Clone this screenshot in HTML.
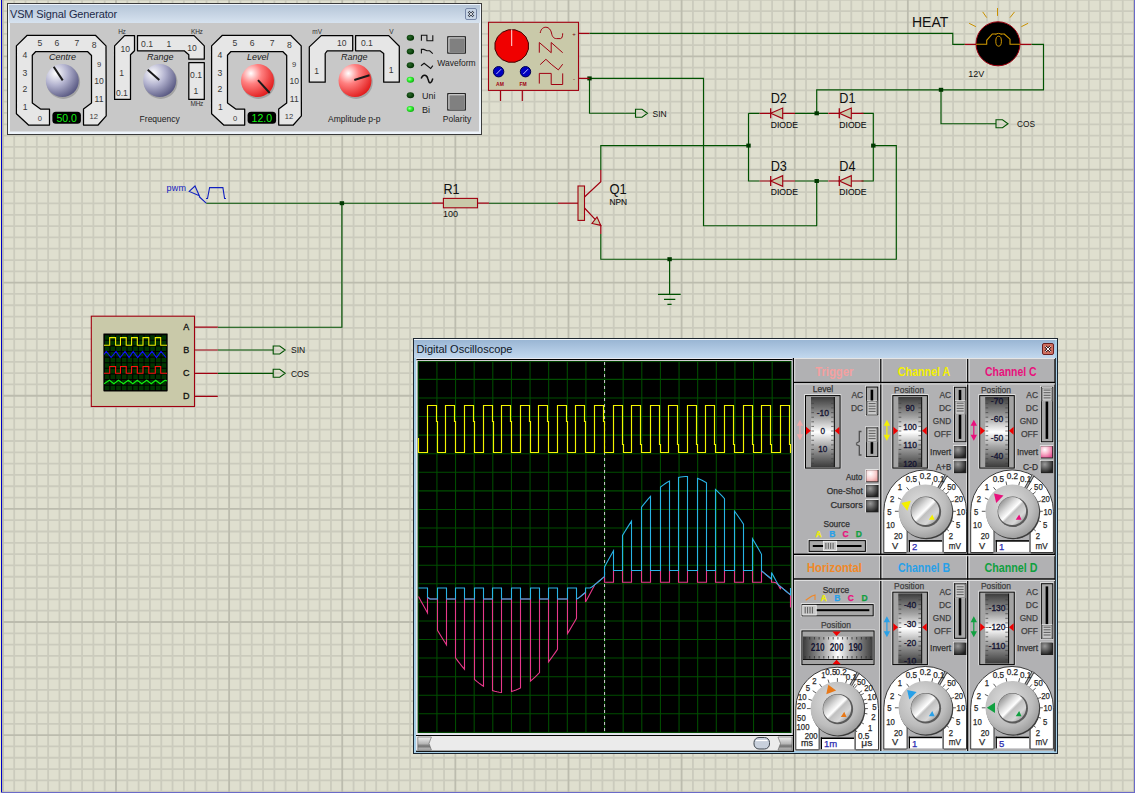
<!DOCTYPE html>
<html><head><meta charset="utf-8"><style>
html,body{margin:0;padding:0;width:1135px;height:793px;overflow:hidden;background:#dfdfcf;}
svg{display:block;font-family:"Liberation Sans",sans-serif;}
</style></head><body>
<svg width="1135" height="793" viewBox="0 0 1135 793">
<rect x="0" y="0" width="1135" height="793" fill="#dfdfcf"/>
<path d="M14.19 0V793M25.50 0V793M36.82 0V793M48.13 0V793M59.44 0V793M70.75 0V793M82.06 0V793M93.38 0V793M104.69 0V793M127.31 0V793M138.62 0V793M149.94 0V793M161.25 0V793M172.56 0V793M183.87 0V793M195.18 0V793M206.50 0V793M217.81 0V793M240.43 0V793M251.74 0V793M263.06 0V793M274.37 0V793M285.68 0V793M296.99 0V793M308.30 0V793M319.62 0V793M330.93 0V793M353.55 0V793M364.86 0V793M376.18 0V793M387.49 0V793M398.80 0V793M410.11 0V793M421.42 0V793M432.74 0V793M444.05 0V793M466.67 0V793M477.98 0V793M489.30 0V793M500.61 0V793M511.92 0V793M523.23 0V793M534.54 0V793M545.86 0V793M557.17 0V793M579.79 0V793M591.10 0V793M602.42 0V793M613.73 0V793M625.04 0V793M636.35 0V793M647.66 0V793M658.98 0V793M670.29 0V793M692.91 0V793M704.22 0V793M715.54 0V793M726.85 0V793M738.16 0V793M749.47 0V793M760.78 0V793M772.10 0V793M783.41 0V793M806.03 0V793M817.34 0V793M828.66 0V793M839.97 0V793M851.28 0V793M862.59 0V793M873.90 0V793M885.22 0V793M896.53 0V793M919.15 0V793M930.46 0V793M941.78 0V793M953.09 0V793M964.40 0V793M975.71 0V793M987.02 0V793M998.34 0V793M1009.65 0V793M1032.27 0V793M1043.58 0V793M1054.90 0V793M1066.21 0V793M1077.52 0V793M1088.83 0V793M1100.14 0V793M1111.46 0V793M1122.77 0V793M0 -0.15H1135M0 11.16H1135M0 22.47H1135M0 33.79H1135M0 45.10H1135M0 67.72H1135M0 79.03H1135M0 90.35H1135M0 101.66H1135M0 112.97H1135M0 124.28H1135M0 135.59H1135M0 146.91H1135M0 158.22H1135M0 180.84H1135M0 192.15H1135M0 203.47H1135M0 214.78H1135M0 226.09H1135M0 237.40H1135M0 248.71H1135M0 260.03H1135M0 271.34H1135M0 293.96H1135M0 305.27H1135M0 316.59H1135M0 327.90H1135M0 339.21H1135M0 350.52H1135M0 361.83H1135M0 373.15H1135M0 384.46H1135M0 407.08H1135M0 418.39H1135M0 429.71H1135M0 441.02H1135M0 452.33H1135M0 463.64H1135M0 474.95H1135M0 486.27H1135M0 497.58H1135M0 520.20H1135M0 531.51H1135M0 542.83H1135M0 554.14H1135M0 565.45H1135M0 576.76H1135M0 588.07H1135M0 599.39H1135M0 610.70H1135M0 633.32H1135M0 644.63H1135M0 655.95H1135M0 667.26H1135M0 678.57H1135M0 689.88H1135M0 701.19H1135M0 712.51H1135M0 723.82H1135M0 746.44H1135M0 757.75H1135M0 769.07H1135M0 780.38H1135M0 791.69H1135" stroke="#cbcbbd" stroke-width="1.8" fill="none"/>
<path d="M2.88 0V793M116.00 0V793M229.12 0V793M342.24 0V793M455.36 0V793M568.48 0V793M681.60 0V793M794.72 0V793M907.84 0V793M1020.96 0V793M1134.08 0V793M0 56.41H1135M0 169.53H1135M0 282.65H1135M0 395.77H1135M0 508.89H1135M0 622.01H1135M0 735.13H1135" stroke="#bcbcae" stroke-width="1.8" fill="none"/>
<rect x="0" y="0" width="1" height="793" fill="#eeeec8"/>
<rect x="1" y="0" width="1" height="792" fill="#0000c8"/>
<rect x="1" y="792" width="1134" height="1" fill="#6a6ac8"/>
<rect x="1134" y="0" width="1" height="793" fill="#6a6ac8"/>
<path d="M589.5 33.3H952.8V44.4H964.8M1031.4 44.4H1043.5V89.8H816.7V113.3M941 89.8V123.7H996M589.5 78.4H703.5V225.7H816.7V181M589.5 78.4V113.2H635.5M748.5 113.3H759.6M795 113.3H828M861.5 113.3H873.3V181H861.5M828 181H795M759.6 181H748.5V113.3M600.8 170V145.6H748.5M873.3 145.6H896.3V259.2H600.8V234M669.6 259.2V294.4M206.2 203.2H431.8M489 203.2H558M341.9 203.2V327.2H217.8M217.8 350H273.2M217.8 373.3H273.2" stroke="#005200" stroke-width="1.15" fill="none"/>
<path d="M658 294.4H680.7M664 299.4H675.3M667.4 304.4H671.6" stroke="#005200" stroke-width="1.3" fill="none"/>
<rect x="587.3" y="76.4" width="4.4" height="4" fill="#003800"/>
<rect x="814.5" y="111.3" width="4.4" height="4" fill="#003800"/>
<rect x="938.8" y="87.8" width="4.4" height="4" fill="#003800"/>
<rect x="746.3" y="143.6" width="4.4" height="4" fill="#003800"/>
<rect x="871.1" y="143.6" width="4.4" height="4" fill="#003800"/>
<rect x="814.5" y="179.0" width="4.4" height="4" fill="#003800"/>
<rect x="667.4" y="257.2" width="4.4" height="4" fill="#003800"/>
<rect x="339.7" y="201.2" width="4.4" height="4" fill="#003800"/>
<rect x="488.5" y="22.3" width="90" height="68.1" fill="#c9c9a9" stroke="#a00010" stroke-width="1.1"/>
<path d="M578.5 33.3H589.5M578.5 78.4H589.5M500.5 90.4V101M522.3 90.4V101" stroke="#a00010" stroke-width="1.2"/>
<text x="574" y="35.5" font-size="6" fill="#700010" text-anchor="middle">+</text>
<text x="574" y="80.5" font-size="6" fill="#700010" text-anchor="middle">-</text>
<polygon points="528.4,49.2 525.8,55.2 521.1,59.7 515.0,62.2 508.4,62.2 502.3,59.7 497.6,55.2 495.0,49.2 495.0,42.8 497.6,36.8 502.3,32.3 508.4,29.8 515.0,29.8 521.1,32.3 525.8,36.8 528.4,42.8" fill="#f00000" stroke="#400000" stroke-width="1"/>
<path d="M511.7 46V29.5" stroke="#ffe0e0" stroke-width="1"/>
<circle cx="498.6" cy="71.7" r="5.2" fill="#0000c0" stroke="#000050" stroke-width="1"/>
<path d="M496.40000000000003 74L501.1 69.2" stroke="#d0d0ff" stroke-width="0.9"/>
<circle cx="525.5" cy="71.7" r="5.2" fill="#0000c0" stroke="#000050" stroke-width="1"/>
<path d="M523.3 74L528.0 69.2" stroke="#d0d0ff" stroke-width="0.9"/>
<text x="500" y="86" font-size="5" fill="#a00010" text-anchor="middle" font-weight="bold">AM</text>
<text x="523" y="86" font-size="5" fill="#a00010" text-anchor="middle" font-weight="bold">FM</text>
<path d="M540.2 33C541 28.5 543.5 27.2 546 27.2C548.8 27.2 551 30 551.5 33C552.2 37 554 38.6 556.5 38.6H560.5C562 38.6 562.7 36 562.7 33.3M539.3 52.7V42.5L551.2 52.7V42.5L562.7 52.7M540.2 64.6L545.9 59.3L551.2 64.2L558.3 69.9L562.7 64.2M539.3 83.6V73.4H551.2V84.5H562.7V73.4" stroke="#a00010" stroke-width="1" fill="none"/>
<path d="M635.5 109.2H642.0L647.5 113.2L642.0 117.2H635.5Z" fill="none" stroke="#005200" stroke-width="1.1"/>
<text x="652.5" y="116.5" font-size="9" fill="#101010" textLength="14.2" lengthAdjust="spacingAndGlyphs">SIN</text>
<path d="M996 119.7H1002.5L1008 123.7L1002.5 127.7H996Z" fill="none" stroke="#005200" stroke-width="1.1"/>
<text x="1017" y="127.0" font-size="9" fill="#101010" textLength="18" lengthAdjust="spacingAndGlyphs">COS</text>
<path d="M273.2 346H279.7L285.2 350L279.7 354H273.2Z" fill="none" stroke="#005200" stroke-width="1.1"/>
<text x="291" y="353.3" font-size="9" fill="#101010" textLength="14.2" lengthAdjust="spacingAndGlyphs">SIN</text>
<path d="M273.2 369.3H279.7L285.2 373.3L279.7 377.3H273.2Z" fill="none" stroke="#005200" stroke-width="1.1"/>
<text x="291" y="376.6" font-size="9" fill="#101010" textLength="18" lengthAdjust="spacingAndGlyphs">COS</text>
<path d="M759.7 113.3H795.0" stroke="#a00010" stroke-width="1.2"/>
<path d="M770.7 108.3V118.3" stroke="#a00010" stroke-width="1.3"/>
<path d="M782.7 108.0V118.6L770.7 113.3Z" fill="#c9c9a9" stroke="#a00010" stroke-width="1.1"/>
<text x="770.7" y="102.9" font-size="15.5" fill="#101010" textLength="16.2" lengthAdjust="spacingAndGlyphs">D2</text>
<text x="770.7" y="127.5" font-size="9" fill="#101010" stroke="#101010" stroke-width="0.12" textLength="27.2" lengthAdjust="spacingAndGlyphs">DIODE</text>
<path d="M828.3 113.3H863.5999999999999" stroke="#a00010" stroke-width="1.2"/>
<path d="M839.3 108.3V118.3" stroke="#a00010" stroke-width="1.3"/>
<path d="M851.3 108.0V118.6L839.3 113.3Z" fill="#c9c9a9" stroke="#a00010" stroke-width="1.1"/>
<text x="839.3" y="102.9" font-size="15.5" fill="#101010" textLength="16.2" lengthAdjust="spacingAndGlyphs">D1</text>
<text x="839.3" y="127.5" font-size="9" fill="#101010" stroke="#101010" stroke-width="0.12" textLength="27.2" lengthAdjust="spacingAndGlyphs">DIODE</text>
<path d="M759.7 181H795.0" stroke="#a00010" stroke-width="1.2"/>
<path d="M770.7 176V186" stroke="#a00010" stroke-width="1.3"/>
<path d="M782.7 175.7V186.3L770.7 181Z" fill="#c9c9a9" stroke="#a00010" stroke-width="1.1"/>
<text x="770.7" y="170.6" font-size="15.5" fill="#101010" textLength="16.2" lengthAdjust="spacingAndGlyphs">D3</text>
<text x="770.7" y="195.2" font-size="9" fill="#101010" stroke="#101010" stroke-width="0.12" textLength="27.2" lengthAdjust="spacingAndGlyphs">DIODE</text>
<path d="M828.3 181H863.5999999999999" stroke="#a00010" stroke-width="1.2"/>
<path d="M839.3 176V186" stroke="#a00010" stroke-width="1.3"/>
<path d="M851.3 175.7V186.3L839.3 181Z" fill="#c9c9a9" stroke="#a00010" stroke-width="1.1"/>
<text x="839.3" y="170.6" font-size="15.5" fill="#101010" textLength="16.2" lengthAdjust="spacingAndGlyphs">D4</text>
<text x="839.3" y="195.2" font-size="9" fill="#101010" stroke="#101010" stroke-width="0.12" textLength="27.2" lengthAdjust="spacingAndGlyphs">DIODE</text>
<path d="M964.8 44.4H976M1020 44.4H1031.4" stroke="#a00010" stroke-width="1.2"/>
<circle cx="998" cy="43.8" r="22" fill="#000" stroke="#a00010" stroke-width="1"/>
<path d="M976 44.3H986.7V40.3L992.3 34H996.3M1000.8 34H1004.3L1010 39.2V44.3H1020.2" stroke="#d09800" stroke-width="1.1" fill="none"/>
<path d="M995.5 34.5C997.5 33 999.5 33 1001.5 34.5" stroke="#d09800" stroke-width="1" fill="none"/>
<ellipse cx="998.6" cy="41.2" rx="2.8" ry="5" stroke="#d09800" stroke-width="1" fill="none"/>
<path d="M997.5 8L997.5 15.9" stroke="#c89000" stroke-width="1"/>
<path d="M982.7 11.9L986.7 17.6" stroke="#c89000" stroke-width="1"/>
<path d="M1014.5 11.9L1010 17.6" stroke="#c89000" stroke-width="1"/>
<path d="M969.1 23.3L975.9 26.7" stroke="#c89000" stroke-width="1"/>
<path d="M1028.1 23.3L1021.3 26.7" stroke="#c89000" stroke-width="1"/>
<text x="912" y="27" font-size="14" fill="#101010">HEAT</text>
<text x="968.3" y="77" font-size="9" fill="#101010" textLength="16" lengthAdjust="spacingAndGlyphs">12V</text>
<path d="M431.8 203.2H443.4M477.5 203.2H489" stroke="#a00010" stroke-width="1.2"/>
<rect x="443.4" y="198.4" width="34.1" height="9.4" fill="#c9c9a9" stroke="#a00010" stroke-width="1.1"/>
<text x="443.4" y="194" font-size="15" fill="#101010" textLength="16.1" lengthAdjust="spacingAndGlyphs">R1</text>
<text x="443" y="217" font-size="9" fill="#101010">100</text>
<path d="M558 203.2H578" stroke="#a00010" stroke-width="1.2"/>
<rect x="578" y="186" width="6.5" height="34.4" fill="#c9c9a9" stroke="#a00010" stroke-width="1.1"/>
<path d="M584.5 197L600.8 181.7V170M584.5 208L600.8 225.4V234" stroke="#a00010" stroke-width="1.2" fill="none"/>
<path d="M600.8 225.4L592 223.5L597 217Z" fill="#c9c9a9" stroke="#a00010" stroke-width="1.1"/>
<text x="609.4" y="193.6" font-size="15" fill="#101010" textLength="17.3" lengthAdjust="spacingAndGlyphs">Q1</text>
<text x="609.5" y="205.3" font-size="9" fill="#101010" stroke="#101010" stroke-width="0.12" textLength="17.6" lengthAdjust="spacingAndGlyphs">NPN</text>
<text x="166.5" y="190.5" font-size="9" fill="#1020c0" letter-spacing="0.3">pwm</text>
<path d="M206.2 203.2L199 196.5M189.2 191.4L195 186L199.3 195.7Z" stroke="#1020c0" stroke-width="1.1" fill="none"/>
<path d="M206 198.5H207.5L209.6 187.6H222.9L224.6 198.5H226" stroke="#1020c0" stroke-width="1.1" fill="none"/>
<path d="M194.5 327.2H217.8M194.5 350H217.8M194.5 373.3H217.8M194.5 396.4H217.8" stroke="#a00010" stroke-width="1.2"/>
<rect x="91.3" y="316.2" width="103.2" height="90.3" fill="#c9c9a9" stroke="#a00010" stroke-width="1.1"/>
<rect x="104" y="334" width="63" height="56.8" fill="#003500"/>
<path d="M104.30 334V390.8M109.98 334V390.8M115.66 334V390.8M121.34 334V390.8M127.02 334V390.8M132.70 334V390.8M138.38 334V390.8M144.06 334V390.8M149.74 334V390.8M155.42 334V390.8M161.10 334V390.8M166.78 334V390.8M104 334.60H167M104 340.22H167M104 345.84H167M104 351.46H167M104 357.08H167M104 362.70H167M104 368.32H167M104 373.94H167M104 379.56H167M104 385.18H167M104 390.80H167" stroke="#000" stroke-width="1.1"/>
<rect x="104" y="334" width="63" height="56.8" fill="none" stroke="#000" stroke-width="1"/>
<path d="M104 345.2H109.7V337.6H115.6V345.2H120.5V337.6H126.2V345.2H131.6V337.6H137.3V345.2H143V337.6H148.8V345.2H155.3V337.6H160.7V345.2H167" stroke="#f0f000" stroke-width="1.1" fill="none"/>
<path d="M104 373.3H109.7V366.5H115.6V373.3H120.5V366.5H126.2V373.3H131.6V366.5H137.3V373.3H143V366.5H148.8V373.3H155.3V366.5H160.7V373.3H167" stroke="#ff1010" stroke-width="1.1" fill="none"/>
<path d="M104.0 354.5L106.2 351.5L111.1 357.5L116.0 351.5L120.1 357.5L125.0 351.5L129.1 357.5L133.2 351.5L137.7 357.5L142.6 351.5L147.1 357.5L152.0 351.5L156.5 357.5L161.0 351.5L166.0 357.5" stroke="#1010ff" stroke-width="1.1" fill="none"/>
<path d="M104.1 383.8L109.4 380.2L113.9 383.8L118.4 380.2L123.4 383.8L128.3 380.2L132.8 383.8L137.3 380.2L141.8 383.8L146.7 380.2L151.2 383.8L155.7 380.2L160.2 383.8L165.1 380.2L167.0 381.0" stroke="#10f010" stroke-width="1.1" fill="none"/>
<text x="186.3" y="330.0" font-size="9" fill="#101010" stroke="#101010" stroke-width="0.3" text-anchor="middle">A</text>
<text x="186.3" y="352.8" font-size="9" fill="#101010" stroke="#101010" stroke-width="0.3" text-anchor="middle">B</text>
<text x="186.3" y="376.1" font-size="9" fill="#101010" stroke="#101010" stroke-width="0.3" text-anchor="middle">C</text>
<text x="186.3" y="399.2" font-size="9" fill="#101010" stroke="#101010" stroke-width="0.3" text-anchor="middle">D</text>
<defs>
<linearGradient id="tbar" x1="0" y1="0" x2="0" y2="1"><stop offset="0" stop-color="#b6c6d8"/><stop offset="1" stop-color="#d6e2ef"/></linearGradient>
<radialGradient id="knobB" cx="0.3" cy="0.28" r="0.8"><stop offset="0" stop-color="#ffffff"/><stop offset="0.45" stop-color="#b4b4d0"/><stop offset="1" stop-color="#55557f"/></radialGradient>
<radialGradient id="knobR" cx="0.3" cy="0.28" r="0.8"><stop offset="0" stop-color="#ffffff"/><stop offset="0.4" stop-color="#ff8080"/><stop offset="1" stop-color="#e01818"/></radialGradient>
<radialGradient id="ledOff" cx="0.4" cy="0.4" r="0.6"><stop offset="0" stop-color="#2a6a2a"/><stop offset="1" stop-color="#003000"/></radialGradient>
<radialGradient id="ledOn" cx="0.4" cy="0.4" r="0.6"><stop offset="0" stop-color="#a0ffa0"/><stop offset="0.5" stop-color="#30f030"/><stop offset="1" stop-color="#10b010"/></radialGradient>
</defs>
<rect x="7" y="3" width="475" height="132" fill="#3c3c3c"/>
<rect x="8" y="4" width="473" height="130" fill="#eef4fb"/>
<rect x="9" y="5" width="471" height="18" fill="url(#tbar)"/>
<rect x="10" y="23" width="469" height="108.5" fill="#c8c8c8"/>
<text x="10" y="17.8" font-size="11" fill="#1e2a48" letter-spacing="-0.15">VSM Signal Generator</text>
<rect x="465.5" y="8.5" width="11" height="11" rx="1.5" fill="#c8d6e6" stroke="#7888a8" stroke-width="1"/>
<path d="M468.5 11.5L473.5 16.5M473.5 11.5L468.5 16.5" stroke="#303848" stroke-width="2.2"/>
<path d="M468.5 11.5L473.5 16.5M473.5 11.5L468.5 16.5" stroke="#ffffff" stroke-width="0.8"/>
<path d="M16.4 45.9L27.2 35.3L95.4 35.3L106.0 45.9L106.2 115.8L98.1 125.0L83.5 125.0L83.5 109.1L91.5 103.1L91.5 55.5L87.5 51.5L35.8 51.5L32.3 55.2L32.3 103.1L40.5 109.1L49.5 109.1L49.5 125.0L28.5 125.0L16.4 113.7Z" fill="#e6e6e6" stroke="#000" stroke-width="1.25" stroke-linejoin="round"/>
<text x="39.8" y="121.0" font-size="7.6" fill="#383838" text-anchor="middle">0</text>
<text x="25.2" y="110.0" font-size="8.6" fill="#383838" text-anchor="middle">1</text>
<text x="24.8" y="91.5" font-size="8.6" fill="#383838" text-anchor="middle">2</text>
<text x="24.8" y="75.6" font-size="8.6" fill="#383838" text-anchor="middle">3</text>
<text x="24.8" y="58.2" font-size="8.6" fill="#383838" text-anchor="middle">4</text>
<text x="39.8" y="45.8" font-size="8.6" fill="#383838" text-anchor="middle">5</text>
<text x="57.0" y="45.8" font-size="8.6" fill="#383838" text-anchor="middle">6</text>
<text x="76.9" y="45.8" font-size="8.6" fill="#383838" text-anchor="middle">7</text>
<text x="94.1" y="48.4" font-size="8.6" fill="#383838" text-anchor="middle">8</text>
<text x="99.0" y="67.0" font-size="7.6" fill="#383838" text-anchor="middle">9</text>
<text x="99.0" y="84.3" font-size="8.6" fill="#383838" text-anchor="middle">10</text>
<text x="99.0" y="102.2" font-size="8.6" fill="#383838" text-anchor="middle">11</text>
<text x="93.7" y="118.6" font-size="7.6" fill="#383838" text-anchor="middle">12</text>
<text x="62.5" y="59.5" font-size="9" font-style="italic" fill="#202020" text-anchor="middle">Centre</text>
<circle cx="63.3" cy="82.1" r="16.8" fill="#8a8a8a" opacity="0.6"/>
<circle cx="62.3" cy="80.6" r="16.5" fill="url(#knobB)"/>
<path d="M53.7 66.7L62.7 80.4" stroke="#1a1a1a" stroke-width="2"/>
<rect x="52.4" y="111.8" width="28.5" height="12" rx="3.5" fill="#000"/>
<text x="66.6" y="122" font-size="10.5" fill="#10f010" text-anchor="middle">50.0</text>
<path d="M211.6 45.9L222.4 35.3L290.6 35.3L301.2 45.9L301.4 115.8L293.3 125.0L278.7 125.0L278.7 109.1L286.7 103.1L286.7 55.5L282.7 51.5L231.0 51.5L227.5 55.2L227.5 103.1L235.7 109.1L244.7 109.1L244.7 125.0L223.7 125.0L211.6 113.7Z" fill="#e6e6e6" stroke="#000" stroke-width="1.25" stroke-linejoin="round"/>
<text x="235.0" y="121.0" font-size="7.6" fill="#383838" text-anchor="middle">0</text>
<text x="220.4" y="110.0" font-size="8.6" fill="#383838" text-anchor="middle">1</text>
<text x="220.0" y="91.5" font-size="8.6" fill="#383838" text-anchor="middle">2</text>
<text x="220.0" y="75.6" font-size="8.6" fill="#383838" text-anchor="middle">3</text>
<text x="220.0" y="58.2" font-size="8.6" fill="#383838" text-anchor="middle">4</text>
<text x="235.0" y="45.8" font-size="8.6" fill="#383838" text-anchor="middle">5</text>
<text x="252.2" y="45.8" font-size="8.6" fill="#383838" text-anchor="middle">6</text>
<text x="272.1" y="45.8" font-size="8.6" fill="#383838" text-anchor="middle">7</text>
<text x="289.3" y="48.4" font-size="8.6" fill="#383838" text-anchor="middle">8</text>
<text x="294.2" y="67.0" font-size="7.6" fill="#383838" text-anchor="middle">9</text>
<text x="294.2" y="84.3" font-size="8.6" fill="#383838" text-anchor="middle">10</text>
<text x="294.2" y="102.2" font-size="8.6" fill="#383838" text-anchor="middle">11</text>
<text x="288.9" y="118.6" font-size="7.6" fill="#383838" text-anchor="middle">12</text>
<text x="257.7" y="59.5" font-size="9" font-style="italic" fill="#202020" text-anchor="middle">Level</text>
<circle cx="258.5" cy="82.1" r="16.8" fill="#8a8a8a" opacity="0.6"/>
<circle cx="257.5" cy="80.6" r="16.5" fill="url(#knobR)"/>
<path d="M258.0 80.2L269.7 93.0" stroke="#1a1a1a" stroke-width="2"/>
<rect x="247.6" y="111.8" width="28.5" height="12" rx="3.5" fill="#000"/>
<text x="261.8" y="122" font-size="10.5" fill="#10f010" text-anchor="middle">12.0</text>
<path d="M114.6 45.9L124.6 35.6L134.5 35.6L134.5 50.8L130.5 54.8L130.5 99.4L114.6 99.4Z" fill="#e6e6e6" stroke="#000" stroke-width="1.25" stroke-linejoin="round"/>
<path d="M137.5 35.6L194.1 35.6L204.3 45.9L204.3 59.2L188.8 59.2L188.8 54.8L184.2 50.8L137.5 50.8Z" fill="#e6e6e6" stroke="#000" stroke-width="1.25" stroke-linejoin="round"/>
<path d="M188.8 62.7L204.3 62.7L204.3 99.4L188.8 99.4Z" fill="#e6e6e6" stroke="#000" stroke-width="1.25" stroke-linejoin="round"/>
<text x="125.2" y="51.8" font-size="8.6" fill="#383838" text-anchor="middle">10</text>
<text x="121.7" y="75.7" font-size="8.6" fill="#383838" text-anchor="middle">1</text>
<text x="121.9" y="96.2" font-size="8.6" fill="#383838" text-anchor="middle">0.1</text>
<text x="147.1" y="46.5" font-size="8.6" fill="#383838" text-anchor="middle">0.1</text>
<text x="168.9" y="46.5" font-size="8.6" fill="#383838" text-anchor="middle">1</text>
<text x="192.1" y="51.2" font-size="8.6" fill="#383838" text-anchor="middle">10</text>
<text x="196.1" y="77.7" font-size="8.6" fill="#383838" text-anchor="middle">0.1</text>
<text x="195.8" y="94.2" font-size="8.6" fill="#383838" text-anchor="middle">1</text>
<text x="121.9" y="34" font-size="6.5" fill="#303030" text-anchor="middle" letter-spacing="-0.3">Hz</text>
<text x="196.8" y="34" font-size="6.5" fill="#303030" text-anchor="middle" letter-spacing="-0.3">KHz</text>
<text x="196.8" y="105.5" font-size="6.5" fill="#303030" text-anchor="middle" letter-spacing="-0.3">MHz</text>
<text x="160.3" y="59.5" font-size="9" font-style="italic" fill="#202020" text-anchor="middle">Range</text>
<circle cx="160.7" cy="82.1" r="16.8" fill="#8a8a8a" opacity="0.6"/>
<circle cx="159.7" cy="80.6" r="16.5" fill="url(#knobB)"/>
<path d="M147.7 69.8L159.3 80" stroke="#1a1a1a" stroke-width="2"/>
<text x="159.7" y="121.5" font-size="8.5" fill="#202020" text-anchor="middle">Frequency</text>
<path d="M309.3 46.9L321.2 35.6L352.7 35.6L352.7 50.8L327.2 50.8L325.2 53.5L325.2 82.2L309.3 82.2Z" fill="#e6e6e6" stroke="#000" stroke-width="1.25" stroke-linejoin="round"/>
<path d="M355.6 35.6L388.7 35.6L399.3 46.2L399.3 82.2L383.7 82.2L383.7 53.5L380.1 50.8L355.6 50.8Z" fill="#e6e6e6" stroke="#000" stroke-width="1.25" stroke-linejoin="round"/>
<text x="341.7" y="45.9" font-size="8.6" fill="#383838" text-anchor="middle">10</text>
<text x="316.6" y="73.7" font-size="8.6" fill="#383838" text-anchor="middle">1</text>
<text x="366.9" y="45.9" font-size="8.6" fill="#383838" text-anchor="middle">0.1</text>
<text x="391.1" y="73" font-size="8.6" fill="#383838" text-anchor="middle">1</text>
<text x="317.2" y="34" font-size="6.5" fill="#303030" text-anchor="middle">mV</text>
<text x="391.4" y="34" font-size="6.5" fill="#303030" text-anchor="middle">V</text>
<text x="354.3" y="59.5" font-size="9" font-style="italic" fill="#202020" text-anchor="middle">Range</text>
<circle cx="356" cy="82.1" r="16.8" fill="#8a8a8a" opacity="0.6"/>
<circle cx="355" cy="80.6" r="16.5" fill="url(#knobR)"/>
<path d="M354.3 80L369.5 75.3" stroke="#1a1a1a" stroke-width="2"/>
<text x="354.3" y="121.5" font-size="8.5" fill="#202020" text-anchor="middle">Amplitude p-p</text>
<ellipse cx="410.4" cy="37.8" rx="3.7" ry="3.0" fill="url(#ledOff)"/>
<ellipse cx="410.4" cy="51.6" rx="3.7" ry="3.0" fill="url(#ledOff)"/>
<ellipse cx="410.4" cy="65.3" rx="3.7" ry="3.0" fill="url(#ledOff)"/>
<ellipse cx="410.4" cy="79.7" rx="3.7" ry="3.0" fill="url(#ledOn)"/>
<ellipse cx="410.4" cy="95.2" rx="3.7" ry="3.0" fill="url(#ledOff)"/>
<ellipse cx="410.4" cy="109" rx="3.7" ry="3.0" fill="url(#ledOn)"/>
<path d="M421.4 40.7V35.2H426.9V40.7H432.8V35.2M421.4 53.6V49.4H423.8L426.9 50.8H429.7L432.8 53.6M421 65.7L424.1 63.3L430.7 68.5L432.8 65.7" stroke="#101010" stroke-width="1.1" fill="none"/>
<path d="M421.2 78.5C422.5 74.5 426.5 74 427.8 78.5L428.8 81.5C429.5 83.5 431.5 83.5 432.8 78.5" stroke="#101010" stroke-width="1.5" fill="none"/>
<text x="422" y="99" font-size="9" fill="#202020">Uni</text>
<text x="422" y="112.5" font-size="9" fill="#202020">Bi</text>
<rect x="447.3" y="36.3" width="18.5" height="17.3" fill="#000"/>
<rect x="448.3" y="37.3" width="16.5" height="15.3" fill="#f4f4f4"/>
<rect x="449.3" y="38.3" width="15.5" height="14.3" fill="#808080"/>
<rect x="447.3" y="93.2" width="18.5" height="17.3" fill="#000"/>
<rect x="448.3" y="94.2" width="16.5" height="15.3" fill="#f4f4f4"/>
<rect x="449.3" y="95.2" width="15.5" height="14.3" fill="#808080"/>
<text x="456.5" y="66" font-size="8.5" fill="#202020" text-anchor="middle">Waveform</text>
<text x="457" y="121.5" font-size="8.5" fill="#202020" text-anchor="middle">Polarity</text>
<defs>
<linearGradient id="tbar2" x1="0" y1="0" x2="0" y2="1"><stop offset="0" stop-color="#9ab6d4"/><stop offset="1" stop-color="#c2d8ee"/></linearGradient>
<linearGradient id="drumV" x1="0" y1="0" x2="0" y2="1"><stop offset="0" stop-color="#3c3c3c"/><stop offset="0.3" stop-color="#a8a8a8"/><stop offset="0.5" stop-color="#ffffff"/><stop offset="0.7" stop-color="#a8a8a8"/><stop offset="1" stop-color="#3c3c3c"/></linearGradient>
<linearGradient id="drumH" x1="0" y1="0" x2="1" y2="0"><stop offset="0" stop-color="#3c3c3c"/><stop offset="0.3" stop-color="#a8a8a8"/><stop offset="0.5" stop-color="#ffffff"/><stop offset="0.7" stop-color="#a8a8a8"/><stop offset="1" stop-color="#3c3c3c"/></linearGradient>
<radialGradient id="knobBody" cx="0.42" cy="0.38" r="0.66"><stop offset="0" stop-color="#e0e0e0"/><stop offset="0.7" stop-color="#bcbcbc"/><stop offset="1" stop-color="#9a9a9a"/></radialGradient>
<linearGradient id="cap" x1="0.1" y1="0.1" x2="0.9" y2="0.9"><stop offset="0" stop-color="#8a8a8a"/><stop offset="0.3" stop-color="#d8d8d8"/><stop offset="0.48" stop-color="#ffffff"/><stop offset="0.56" stop-color="#c0c0c0"/><stop offset="0.8" stop-color="#d8d8d8"/><stop offset="1" stop-color="#9a9a9a"/></linearGradient>
<radialGradient id="btnDark" cx="0.35" cy="0.3" r="0.8"><stop offset="0" stop-color="#9a9a9a"/><stop offset="0.6" stop-color="#505050"/><stop offset="1" stop-color="#202020"/></radialGradient>
<radialGradient id="btnPink" cx="0.35" cy="0.3" r="0.8"><stop offset="0" stop-color="#ffffff"/><stop offset="0.5" stop-color="#f8b0c8"/><stop offset="1" stop-color="#e05090"/></radialGradient>
<radialGradient id="btnPinkL" cx="0.35" cy="0.3" r="0.8"><stop offset="0" stop-color="#ffffff"/><stop offset="0.6" stop-color="#f8d0d0"/><stop offset="1" stop-color="#e8a0a0"/></radialGradient>
<linearGradient id="sbtn" x1="0" y1="0" x2="0" y2="1"><stop offset="0" stop-color="#f0f0f0"/><stop offset="0.5" stop-color="#b8b8b8"/><stop offset="0.7" stop-color="#707070"/><stop offset="1" stop-color="#d0d0d0"/></linearGradient>
</defs>
<rect x="413" y="338" width="645" height="416" fill="#1c2630"/>
<rect x="414" y="339" width="643" height="414" fill="#a6cfe8"/>
<rect x="414" y="339" width="643" height="1" fill="#f4f8fc"/>
<rect x="414" y="340" width="641" height="18" fill="url(#tbar2)"/>
<text x="416.5" y="352.8" font-size="11" fill="#101828">Digital Oscilloscope</text>
<rect x="1042.5" y="343.5" width="11" height="11" rx="1.5" fill="#d07060" stroke="#6a2020" stroke-width="1"/>
<path d="M1045.3 346.3L1050.7 351.7M1050.7 346.3L1045.3 351.7" stroke="#402020" stroke-width="2.4"/>
<path d="M1045.3 346.3L1050.7 351.7M1050.7 346.3L1045.3 351.7" stroke="#ffffff" stroke-width="1"/>
<rect x="416" y="358" width="378" height="393.5" fill="#e8e8ee"/>
<rect x="416.5" y="359" width="376" height="1.2" fill="#000"/>
<rect x="417" y="360.2" width="375" height="0.9" fill="#d8d0d8"/>
<rect x="417.8" y="361" width="373.5" height="372" fill="#000"/>
<path d="M436.93 361V732.8M455.55 361V732.8M474.18 361V732.8M492.80 361V732.8M511.43 361V732.8M530.05 361V732.8M548.67 361V732.8M567.30 361V732.8M585.92 361V732.8M623.17 361V732.8M641.80 361V732.8M660.42 361V732.8M679.05 361V732.8M697.67 361V732.8M716.30 361V732.8M734.92 361V732.8M753.55 361V732.8M772.17 361V732.8M418 379.38H791M418 397.96H791M418 416.54H791M418 435.12H791M418 453.70H791M418 472.28H791M418 490.86H791M418 509.44H791M418 528.02H791M418 546.60H791M418 565.18H791M418 583.76H791M418 602.34H791M418 620.92H791M418 639.50H791M418 658.08H791M418 676.66H791M418 695.24H791M418 713.82H791" stroke="#004e00" stroke-width="1.05" fill="none"/>
<rect x="418.3" y="361.6" width="372.5" height="370.8" fill="none" stroke="#004a00" stroke-width="1"/>
<path d="M604.55 361.6V732.4" stroke="#004e00" stroke-width="1.05"/>
<path d="M604.55 362V732.4" stroke="#c4c4c4" stroke-width="1.05" stroke-dasharray="3,3"/>
<path d="M418.5 438V452.5H427.5V405.5H436.5V421.5H437.5V452.5H445.5V405.5H454.5V421.5H455.5V452.5H464.5V405.5H473.5V421.5H474.5V452.5H483.5V405.5H492.5V421.5H493.5V452.5H501.5V405.5H510.5V421.5H511.5V452.5H520.5V405.5H529.5V421.5H530.5V452.5H538.5V405.5H547.5V421.5H548.5V452.5H557.5V405.5H566.5V421.5H567.5V452.5H575.5V405.5H584.5V421.5H585.5V452.5H594.5V405.5H603.5V421.5H604.5V452.5H613.5V405.5H622.5V444.5H623.5V452.5H631.5V405.5H640.5V444.5H641.5V452.5H650.5V405.5H659.5V444.5H660.5V452.5H668.5V405.5H677.5V444.5H678.5V452.5H687.5V405.5H696.5V444.5H697.5V452.5H705.5V405.5H714.5V444.5H715.5V452.5H724.5V405.5H733.5V444.5H734.5V452.5H743.5V405.5H752.5V444.5H753.5V452.5H761.5V405.5H770.5V444.5H771.5V452.5H780.5V405.5H789.5V444.5H790.5V452.5H791" stroke="#f4f400" stroke-width="1.15" fill="none" stroke-linejoin="miter"/>
<path d="M418.50 596.53L420.75 600.66L423.00 604.77L425.25 608.85L427.50 612.90L427.50 597.28L430.00 599.00L432.50 599.00L435.00 599.00L437.50 599.00L437.50 630.28L437.50 630.28L439.75 634.03L442.00 637.70L444.25 641.29L446.50 644.79L446.50 599.00L448.75 599.00L451.00 599.00L453.25 599.00L455.50 599.00L455.50 657.86L455.50 657.86L457.75 660.87L460.00 663.76L462.25 666.53L464.50 669.18L464.50 599.00L467.00 599.00L469.50 599.00L472.00 599.00L474.50 599.00L474.50 679.39L474.50 679.39L476.75 681.31L479.00 683.09L481.25 684.72L483.50 686.20L483.50 599.00L485.75 599.00L488.00 599.00L490.25 599.00L492.50 599.00L492.50 690.58L492.50 690.58L494.75 691.28L497.00 691.83L499.25 692.21L501.50 692.44L501.50 599.00L504.00 599.00L506.50 599.00L509.00 599.00L511.50 599.00L511.50 691.48L511.50 691.48L513.75 690.83L516.00 690.02L518.25 689.06L520.50 687.93L520.50 599.00L523.00 599.00L525.50 599.00L528.00 599.00L530.50 599.00L530.50 681.10L530.50 681.10L532.75 679.17L535.00 677.09L537.25 674.87L539.50 672.52L539.50 599.00L541.75 599.00L544.00 599.00L546.25 599.00L548.50 599.00L548.50 661.84L548.50 661.84L550.75 658.88L553.00 655.80L555.25 652.61L557.50 649.32L557.50 599.00L560.00 599.00L562.50 599.00L565.00 599.00L567.50 599.00L567.50 633.61L567.50 633.61L569.75 629.86L572.00 626.04L574.25 622.16L576.50 618.23L576.50 599.00L578.75 597.88L581.00 596.07L583.25 594.24L585.50 592.39L585.50 602.04L585.50 602.04L587.75 597.91L590.00 593.76L592.25 589.60L594.50 585.43L594.50 584.92L597.00 582.83L599.50 580.75L602.00 578.67L604.50 576.61L604.50 582.30L604.50 582.30L606.75 582.30L609.00 582.30L611.25 582.30L613.50 582.30L613.50 570.50L615.75 570.50L618.00 570.50L620.25 570.50L622.50 570.50L622.50 582.30L622.50 582.30L624.75 582.30L627.00 582.30L629.25 582.30L631.50 582.30L631.50 570.50L634.00 570.50L636.50 570.50L639.00 570.50L641.50 570.50L641.50 582.30L641.50 582.30L643.75 582.30L646.00 582.30L648.25 582.30L650.50 582.30L650.50 570.50L653.00 570.50L655.50 570.50L658.00 570.50L660.50 570.50L660.50 582.30L660.50 582.30L662.75 582.30L665.00 582.30L667.25 582.30L669.50 582.30L669.50 570.50L671.75 570.50L674.00 570.50L676.25 570.50L678.50 570.50L678.50 582.30L678.50 582.30L680.75 582.30L683.00 582.30L685.25 582.30L687.50 582.30L687.50 570.50L690.00 570.50L692.50 570.50L695.00 570.50L697.50 570.50L697.50 582.30L697.50 582.30L699.75 582.30L702.00 582.30L704.25 582.30L706.50 582.30L706.50 570.50L708.75 570.50L711.00 570.50L713.25 570.50L715.50 570.50L715.50 582.30L715.50 582.30L717.75 582.30L720.00 582.30L722.25 582.30L724.50 582.30L724.50 570.50L727.00 570.50L729.50 570.50L732.00 570.50L734.50 570.50L734.50 582.30L734.50 582.30L736.75 582.30L739.00 582.30L741.25 582.30L743.50 582.30L743.50 570.50L745.75 570.50L748.00 570.50L750.25 570.50L752.50 570.50L752.50 582.30L752.50 582.30L754.75 582.30L757.00 582.30L759.25 582.30L761.50 582.30L761.50 570.92L764.00 572.93L766.50 574.97L769.00 577.02L771.50 579.09L771.50 582.30L771.50 582.30L773.75 582.30L776.00 582.83L778.25 584.96L780.50 589.13L780.50 586.59L783.00 588.67L785.50 590.74L788.00 592.80L790.50 594.85L790.50 607.50L790.50 607.50" stroke="#e8388a" stroke-width="1.1" fill="none"/>
<path d="M418.50 588.00L420.75 588.00L423.00 588.00L425.25 588.00L427.50 588.00L427.50 597.28L430.00 599.00L432.50 599.00L435.00 599.00L437.50 599.00L437.50 588.00L437.50 588.00L439.75 588.00L442.00 588.00L444.25 588.00L446.50 588.00L446.50 599.00L448.75 599.00L451.00 599.00L453.25 599.00L455.50 599.00L455.50 588.00L455.50 588.00L457.75 588.00L460.00 588.00L462.25 588.00L464.50 588.00L464.50 599.00L467.00 599.00L469.50 599.00L472.00 599.00L474.50 599.00L474.50 588.00L474.50 588.00L476.75 588.00L479.00 588.00L481.25 588.00L483.50 588.00L483.50 599.00L485.75 599.00L488.00 599.00L490.25 599.00L492.50 599.00L492.50 588.00L492.50 588.00L494.75 588.00L497.00 588.00L499.25 588.00L501.50 588.00L501.50 599.00L504.00 599.00L506.50 599.00L509.00 599.00L511.50 599.00L511.50 588.00L511.50 588.00L513.75 588.00L516.00 588.00L518.25 588.00L520.50 588.00L520.50 599.00L523.00 599.00L525.50 599.00L528.00 599.00L530.50 599.00L530.50 588.00L530.50 588.00L532.75 588.00L535.00 588.00L537.25 588.00L539.50 588.00L539.50 599.00L541.75 599.00L544.00 599.00L546.25 599.00L548.50 599.00L548.50 588.00L548.50 588.00L550.75 588.00L553.00 588.00L555.25 588.00L557.50 588.00L557.50 599.00L560.00 599.00L562.50 599.00L565.00 599.00L567.50 599.00L567.50 588.00L567.50 588.00L569.75 588.00L572.00 588.00L574.25 588.00L576.50 588.00L576.50 599.00L578.75 597.88L581.00 596.07L583.25 594.24L585.50 592.39L585.50 588.00L585.50 588.00L587.75 588.00L590.00 588.00L592.25 586.79L594.50 584.92L594.50 584.92L597.00 582.83L599.50 580.75L602.00 578.67L604.50 576.61L604.50 566.96L604.50 566.96L606.75 562.86L609.00 558.79L611.25 554.76L613.50 550.77L613.50 570.50L615.75 570.50L618.00 570.50L620.25 570.50L622.50 570.50L622.50 535.39L622.50 535.39L624.75 531.71L627.00 528.11L629.25 524.59L631.50 521.17L631.50 570.50L634.00 570.50L636.50 570.50L639.00 570.50L641.50 570.50L641.50 507.16L641.50 507.16L643.75 504.30L646.00 501.57L648.25 498.96L650.50 496.48L650.50 570.50L653.00 570.50L655.50 570.50L658.00 570.50L660.50 570.50L660.50 487.08L660.50 487.08L662.75 485.35L665.00 483.77L667.25 482.34L669.50 481.07L669.50 570.50L671.75 570.50L674.00 570.50L676.25 570.50L678.50 570.50L678.50 477.52L678.50 477.52L680.75 477.03L683.00 476.69L685.25 476.52L687.50 476.52L687.50 570.50L690.00 570.50L692.50 570.50L695.00 570.50L697.50 570.50L697.50 478.42L697.50 478.42L699.75 479.28L702.00 480.30L704.25 481.48L706.50 482.80L706.50 570.50L708.75 570.50L711.00 570.50L713.25 570.50L715.50 570.50L715.50 489.61L715.50 489.61L717.75 491.67L720.00 493.87L722.25 496.21L724.50 498.68L724.50 570.50L727.00 570.50L729.50 570.50L732.00 570.50L734.50 570.50L734.50 511.14L734.50 511.14L736.75 514.25L739.00 517.47L741.25 520.79L743.50 524.21L743.50 570.50L745.75 570.50L748.00 570.50L750.25 570.50L752.50 570.50L752.50 538.72L752.50 538.72L754.75 542.53L757.00 546.40L759.25 550.33L761.50 554.32L761.50 570.92L764.00 572.93L766.50 574.97L769.00 577.02L771.50 579.09L771.50 572.47L771.50 572.47L773.75 576.63L776.00 580.79L778.25 584.71L780.50 586.59L780.50 586.59L783.00 588.67L785.50 590.74L788.00 592.80L790.50 594.85L790.50 588.00L790.50 588.00" stroke="#28b4e6" stroke-width="1.1" fill="none"/>
<rect x="416" y="733" width="377" height="2.2" fill="#e4e4ec"/>
<rect x="416" y="735" width="377" height="1" fill="#000"/>
<rect x="417" y="736" width="376" height="15" fill="#ebebeb"/>
<rect x="416" y="750.7" width="378" height="1.2" fill="#000"/>
<path d="M417.8 737H431.4L429 743.5L431.4 750H417.8Z" fill="url(#sbtn)" stroke="#606060" stroke-width="0.6"/>
<path d="M778 737H792V750H778L780.5 743.5Z" fill="url(#sbtn)" stroke="#606060" stroke-width="0.6"/>
<rect x="754" y="737.5" width="15.5" height="11.5" rx="5" fill="#c8d0dc" stroke="#404850" stroke-width="1"/>
<path d="M756 740.5H767.5" stroke="#ffffff" stroke-width="1.2"/>
<rect x="793" y="358" width="262.5" height="393" fill="#b1b1b3"/>
<rect x="792.8" y="358" width="1.4" height="393.5" fill="#000"/>
<rect x="879.3" y="358" width="0.9" height="393" fill="#e0e0e0"/>
<rect x="880.1999999999999" y="358" width="1.3" height="393" fill="#000"/>
<rect x="881.6999999999999" y="358" width="1" height="393" fill="#e0e0e0"/>
<rect x="966.2" y="358" width="0.9" height="393" fill="#e0e0e0"/>
<rect x="967.1" y="358" width="1.3" height="393" fill="#000"/>
<rect x="968.6" y="358" width="1" height="393" fill="#e0e0e0"/>
<rect x="794.2" y="358" width="1" height="393" fill="#e0e0e0"/>
<rect x="1054.4" y="358" width="1.3" height="393.5" fill="#000"/>
<rect x="794" y="381.8" width="261" height="1.4" fill="#000"/>
<rect x="794" y="383.4" width="261" height="1" fill="#e4e4e4"/>
<rect x="794" y="553.5999999999999" width="261" height="1.4" fill="#000"/>
<rect x="794" y="555.1999999999999" width="261" height="1" fill="#e4e4e4"/>
<rect x="794" y="578.3" width="261" height="1.4" fill="#000"/>
<rect x="794" y="579.9" width="261" height="1" fill="#e4e4e4"/>
<rect x="794" y="358" width="261" height="1" fill="#e4e4e4"/>
<text x="834.3" y="376" font-size="12.5" font-weight="bold" fill="#f4a0a0" text-anchor="middle" textLength="38.3" lengthAdjust="spacingAndGlyphs">Trigger</text>
<text x="924" y="376" font-size="12.5" font-weight="bold" fill="#f4f000" text-anchor="middle" textLength="52.3" lengthAdjust="spacingAndGlyphs">Channel A</text>
<text x="1010.8" y="376" font-size="12.5" font-weight="bold" fill="#e8107c" text-anchor="middle" textLength="51.7" lengthAdjust="spacingAndGlyphs">Channel C</text>
<text x="834.5" y="571.8" font-size="12.5" font-weight="bold" fill="#f08828" text-anchor="middle" textLength="55" lengthAdjust="spacingAndGlyphs">Horizontal</text>
<text x="924" y="572" font-size="12.5" font-weight="bold" fill="#28a0e8" text-anchor="middle" textLength="52" lengthAdjust="spacingAndGlyphs">Channel B</text>
<text x="1011" y="572" font-size="12.5" font-weight="bold" fill="#10a040" text-anchor="middle" textLength="53" lengthAdjust="spacingAndGlyphs">Channel D</text>
<text x="823.0" y="392.3" font-size="8.5" fill="#303030" stroke="#303030" stroke-width="0.25" text-anchor="middle" textLength="20.4" lengthAdjust="spacingAndGlyphs" >Level</text>
<rect x="804.2" y="394.2" width="37" height="74.5" fill="#eaeaea"/>
<rect x="805.0" y="395.09999999999997" width="35.6" height="73.5" fill="#000"/>
<rect x="806.0" y="396.09999999999997" width="33.6" height="71.5" fill="#a4a4a4"/>
<rect x="811.0" y="397.0" width="23" height="70" fill="url(#drumV)"/>
<rect x="833.8000000000001" y="397.0" width="1.1" height="70" fill="#101010"/>
<path d="M811.4 398.7h2.6M833.7 398.7h-2.6M811.4 403.3h2.6M833.7 403.3h-2.6M811.4 407.9h2.6M833.7 407.9h-2.6M811.4 412.6h2.6M833.7 412.6h-2.6M811.4 417.2h2.6M833.7 417.2h-2.6M811.4 421.8h2.6M833.7 421.8h-2.6M811.4 426.4h2.6M833.7 426.4h-2.6M811.4 431.0h2.6M833.7 431.0h-2.6M811.4 435.7h2.6M833.7 435.7h-2.6M811.4 440.3h2.6M833.7 440.3h-2.6M811.4 444.9h2.6M833.7 444.9h-2.6M811.4 449.5h2.6M833.7 449.5h-2.6M811.4 454.1h2.6M833.7 454.1h-2.6M811.4 458.8h2.6M833.7 458.8h-2.6M811.4 463.4h2.6M833.7 463.4h-2.6" stroke="#404040" stroke-width="0.7"/>
<clipPath id="dc804394"><rect x="811.0" y="397.0" width="23" height="70"/></clipPath>
<text x="822.8" y="415.9" font-size="9.6" fill="#141432" stroke="#141432" stroke-width="0.35" text-anchor="middle" textLength="12.3" lengthAdjust="spacingAndGlyphs" clip-path="url(#dc804394)">-10</text>
<text x="822.8" y="434.1" font-size="9.6" fill="#141432" stroke="#141432" stroke-width="0.35" text-anchor="middle" textLength="4.5" lengthAdjust="spacingAndGlyphs" clip-path="url(#dc804394)">0</text>
<text x="822.8" y="452.3" font-size="9.6" fill="#141432" stroke="#141432" stroke-width="0.35" text-anchor="middle" textLength="9.0" lengthAdjust="spacingAndGlyphs" clip-path="url(#dc804394)">10</text>
<path d="M806.0 426.8L810.8000000000001 430.8L806.0 434.8Z" fill="#f00000"/>
<path d="M839.4000000000001 426.8L834.8000000000001 430.8L839.4000000000001 434.8Z" fill="#f00000"/>
<path d="M800 419.7L796.8 425.7H803.2ZM800 440.2L796.8 434.2H803.2Z" fill="#f0a8a8"/>
<path d="M800 424.7V435.2" stroke="#f0a8a8" stroke-width="1.2"/>
<text x="863.2" y="398.0" font-size="8.6" fill="#404040" stroke="#404040" stroke-width="0.25" text-anchor="end" textLength="11.7" lengthAdjust="spacingAndGlyphs" >AC</text>
<text x="863.2" y="410.5" font-size="8.6" fill="#404040" stroke="#404040" stroke-width="0.25" text-anchor="end" textLength="12.2" lengthAdjust="spacingAndGlyphs" >DC</text>
<rect x="865" y="385.7" width="13.6" height="30.3" fill="#f0f0f0"/>
<rect x="865.8" y="386.5" width="12.5" height="28.900000000000002" fill="#000"/>
<rect x="866.8" y="387.5" width="10.5" height="26.900000000000002" fill="#a8a8a8"/>
<rect x="870.6" y="389.7" width="2.6" height="22.3" fill="#000"/>
<rect x="867.2" y="401" width="9.6" height="13.5" fill="#c8c8c8" stroke="#f8f8f8" stroke-width="0.8"/>
<rect x="867.6" y="401.5" width="9.2" height="13.0" fill="none" stroke="#505050" stroke-width="0.5"/>
<path d="M868.6 403.6h7M868.6 406.2h7M868.6 408.8h7M868.6 411.4h7" stroke="#404040" stroke-width="0.8"/>
<rect x="865" y="426.5" width="13.6" height="31.3" fill="#f0f0f0"/>
<rect x="865.8" y="427.3" width="12.5" height="29.900000000000002" fill="#000"/>
<rect x="866.8" y="428.3" width="10.5" height="27.900000000000002" fill="#a8a8a8"/>
<rect x="870.6" y="430.5" width="2.6" height="23.3" fill="#000"/>
<rect x="867.2" y="428.2" width="9.6" height="13.5" fill="#c8c8c8" stroke="#f8f8f8" stroke-width="0.8"/>
<rect x="867.6" y="428.7" width="9.2" height="13.0" fill="none" stroke="#505050" stroke-width="0.5"/>
<path d="M868.6 430.8h7M868.6 433.4h7M868.6 436.0h7M868.6 438.6h7" stroke="#404040" stroke-width="0.8"/>
<path d="M861.5 431.5H859.3V441.5L856 443.5M861.5 455H859.3V446L856 444.5" stroke="#505050" stroke-width="1.3" fill="none"/>
<text x="862.3" y="480.0" font-size="8.6" fill="#303030" stroke="#303030" stroke-width="0.25" text-anchor="end" textLength="16.2" lengthAdjust="spacingAndGlyphs" >Auto</text>
<text x="862.8" y="494.0" font-size="8.6" fill="#303030" stroke="#303030" stroke-width="0.25" text-anchor="end" textLength="36" lengthAdjust="spacingAndGlyphs" >One-Shot</text>
<text x="862.8" y="508.2" font-size="8.6" fill="#303030" stroke="#303030" stroke-width="0.25" text-anchor="end" textLength="32.4" lengthAdjust="spacingAndGlyphs" >Cursors</text>
<rect x="865.3" y="469.2" width="13.3" height="13.2" fill="#f0f0f0"/>
<rect x="866.0999999999999" y="470.0" width="12.5" height="12.399999999999999" fill="#202020"/>
<rect x="866.3" y="470.2" width="11.3" height="11.2" fill="url(#btnPinkL)"/>
<rect x="865.3" y="484.2" width="13.3" height="13.2" fill="#f0f0f0"/>
<rect x="866.0999999999999" y="485.0" width="12.5" height="12.399999999999999" fill="#202020"/>
<rect x="866.3" y="485.2" width="11.3" height="11.2" fill="url(#btnDark)"/>
<rect x="865.3" y="499.2" width="13.3" height="13.2" fill="#f0f0f0"/>
<rect x="866.0999999999999" y="500.0" width="12.5" height="12.399999999999999" fill="#202020"/>
<rect x="866.3" y="500.2" width="11.3" height="11.2" fill="url(#btnDark)"/>
<text x="836.6" y="527.0" font-size="8.6" fill="#303030" stroke="#303030" stroke-width="0.25" text-anchor="middle" textLength="26.4" lengthAdjust="spacingAndGlyphs" >Source</text>
<text x="818.6" y="537.3" font-size="8.5" fill="#f0f000" stroke="#f0f000" stroke-width="0.25" text-anchor="middle" font-weight="bold" >A</text>
<text x="832.4" y="537.3" font-size="8.5" fill="#28a0e8" stroke="#28a0e8" stroke-width="0.25" text-anchor="middle" font-weight="bold" >B</text>
<text x="845.6" y="537.3" font-size="8.5" fill="#e8107c" stroke="#e8107c" stroke-width="0.25" text-anchor="middle" font-weight="bold" >C</text>
<text x="858.7" y="537.3" font-size="8.5" fill="#10a040" stroke="#10a040" stroke-width="0.25" text-anchor="middle" font-weight="bold" >D</text>
<rect x="807.8" y="539.3" width="58.7" height="13.2" fill="#f0f0f0"/>
<rect x="808.5999999999999" y="540.0999999999999" width="57.300000000000004" height="11.799999999999999" fill="#000"/>
<rect x="809.5999999999999" y="541.0999999999999" width="55.300000000000004" height="9.799999999999999" fill="#a8a8a8"/>
<rect x="812.8" y="545.0" width="48.7" height="2" fill="#000"/>
<rect x="823.4" y="541.3" width="13.2" height="9.2" fill="#c8c8c8" stroke="#f4f4f4" stroke-width="0.8"/>
<path d="M825.9 542.9v6.0M828.3 542.9v6.0M830.7 542.9v6.0M833.1 542.9v6.0" stroke="#404040" stroke-width="0.8"/>
<text x="836.0" y="592.5" font-size="8.6" fill="#303030" stroke="#303030" stroke-width="0.25" text-anchor="middle" textLength="26.4" lengthAdjust="spacingAndGlyphs" >Source</text>
<path d="M805.7 600.2L811.5 596.2L815 595V600" stroke="#f08828" stroke-width="1.1" fill="none"/>
<text x="823.7" y="601.0" font-size="8.5" fill="#f0f000" stroke="#f0f000" stroke-width="0.25" text-anchor="middle" font-weight="bold" >A</text>
<text x="837.3" y="601.0" font-size="8.5" fill="#28a0e8" stroke="#28a0e8" stroke-width="0.25" text-anchor="middle" font-weight="bold" >B</text>
<text x="850.9" y="601.0" font-size="8.5" fill="#e8107c" stroke="#e8107c" stroke-width="0.25" text-anchor="middle" font-weight="bold" >C</text>
<text x="864.5" y="601.0" font-size="8.5" fill="#10a040" stroke="#10a040" stroke-width="0.25" text-anchor="middle" font-weight="bold" >D</text>
<rect x="800.8" y="603.3" width="73.5" height="13.7" fill="#f0f0f0"/>
<rect x="801.5999999999999" y="604.0999999999999" width="72.1" height="12.299999999999999" fill="#000"/>
<rect x="802.5999999999999" y="605.0999999999999" width="70.1" height="10.299999999999999" fill="#a8a8a8"/>
<rect x="805.8" y="609.2" width="63.5" height="2" fill="#000"/>
<rect x="802.7" y="605.3" width="13.5" height="9.7" fill="#c8c8c8" stroke="#f4f4f4" stroke-width="0.8"/>
<path d="M805.2 606.9v6.5M807.6 606.9v6.5M810.0 606.9v6.5M812.4 606.9v6.5" stroke="#404040" stroke-width="0.8"/>
<text x="836.0" y="627.6" font-size="8.6" fill="#404040" stroke="#404040" stroke-width="0.25" text-anchor="middle" textLength="30" lengthAdjust="spacingAndGlyphs" >Position</text>
<rect x="800.6" y="629.6" width="74.5" height="36" fill="#ececec"/>
<rect x="801.4" y="630.4" width="73.2" height="34.8" fill="#000"/>
<rect x="802.4" y="631.4" width="71.2" height="32.8" fill="#a4a4a4"/>
<rect x="803" y="636.5" width="69.7" height="23" fill="url(#drumH)"/>
<rect x="803" y="659" width="69.7" height="1" fill="#101010"/>
<path d="M805.0 637V639.5M805.0 658.5V656M809.7 637V639.5M809.7 658.5V656M814.4 637V639.5M814.4 658.5V656M819.1 637V639.5M819.1 658.5V656M823.8 637V639.5M823.8 658.5V656M828.5 637V639.5M828.5 658.5V656M833.2 637V639.5M833.2 658.5V656M837.9 637V639.5M837.9 658.5V656M842.6 637V639.5M842.6 658.5V656M847.3 637V639.5M847.3 658.5V656M852.0 637V639.5M852.0 658.5V656M856.7 637V639.5M856.7 658.5V656M861.4 637V639.5M861.4 658.5V656M866.1 637V639.5M866.1 658.5V656M870.8 637V639.5M870.8 658.5V656" stroke="#303030" stroke-width="0.8"/>
<text x="817.8" y="651.2" font-size="10" font-weight="bold" fill="#141432" text-anchor="middle" textLength="13.9" lengthAdjust="spacingAndGlyphs">210</text>
<text x="836.6" y="651.2" font-size="10" font-weight="bold" fill="#141432" text-anchor="middle" textLength="13.9" lengthAdjust="spacingAndGlyphs">200</text>
<text x="855.5" y="651.2" font-size="10" font-weight="bold" fill="#141432" text-anchor="middle" textLength="13.9" lengthAdjust="spacingAndGlyphs">190</text>
<path d="M832.4 631.5H840.8L836.6 636Z M832.4 664.3H840.8L836.6 659.8Z" fill="#f00000"/>
<path d="M795.8 749.8V708.6A41 41 0 0 1 878.5 708.6V749.8Z" fill="#ffffff" stroke="#3a3a3a" stroke-width="1"/>
<path d="M850.4 686.1L858.4 672.2" stroke="#3a3a3a" stroke-width="3.0"/>
<path d="M850.4 686.1L858.4 672.2" stroke="#b1b1b3" stroke-width="1.2"/>
<rect x="819.1" y="726.6" width="36.1" height="23.7" fill="#b1b1b3" stroke="#3a3a3a" stroke-width="1"/>
<rect x="818.4" y="749.6" width="37.5" height="1.5" fill="#b1b1b3"/>
<path d="M810.9 708.6L806.9 708.6M812.2 700.4L808.4 699.2M816.0 693.0L812.7 690.7M821.8 687.2L819.5 683.9M829.2 683.4L828.0 679.6M837.4 682.1L837.4 678.1M845.6 683.4L846.8 679.6M853.0 687.2L855.3 683.9M858.8 693.0L862.1 690.7M862.6 700.4L866.4 699.2M863.9 708.6L867.9 708.6M854.4 688.3L857.0 685.2M860.3 695.4L863.8 693.4M863.5 704.0L867.4 703.3M863.5 713.2L867.4 713.9M860.3 721.9L863.8 723.9M854.4 728.9L857.0 732.0" stroke="#303030" stroke-width="0.8"/>
<text x="830.9" y="674.7" font-size="8.3" fill="#2a2a2a" stroke="#2a2a2a" stroke-width="0.25" text-anchor="middle" textLength="11.3" lengthAdjust="spacingAndGlyphs" >0.5</text>
<text x="841.1" y="674.7" font-size="8.3" fill="#2a2a2a" stroke="#2a2a2a" stroke-width="0.25" text-anchor="middle" textLength="11.3" lengthAdjust="spacingAndGlyphs" >0.2</text>
<text x="851.4" y="679.6" font-size="8.3" fill="#2a2a2a" stroke="#2a2a2a" stroke-width="0.25" text-anchor="middle" textLength="11.3" lengthAdjust="spacingAndGlyphs" >0.1</text>
<text x="823.5" y="678.0" font-size="8.3" fill="#2a2a2a" stroke="#2a2a2a" stroke-width="0.25" text-anchor="middle" textLength="4.3" lengthAdjust="spacingAndGlyphs" >1</text>
<text x="814.5" y="683.7" font-size="8.3" fill="#2a2a2a" stroke="#2a2a2a" stroke-width="0.25" text-anchor="middle" textLength="4.3" lengthAdjust="spacingAndGlyphs" >2</text>
<text x="808.0" y="691.1" font-size="8.3" fill="#2a2a2a" stroke="#2a2a2a" stroke-width="0.25" text-anchor="middle" textLength="4.3" lengthAdjust="spacingAndGlyphs" >5</text>
<text x="802.2" y="700.1" font-size="8.3" fill="#2a2a2a" stroke="#2a2a2a" stroke-width="0.25" text-anchor="middle" textLength="8.6" lengthAdjust="spacingAndGlyphs" >10</text>
<text x="801.4" y="709.1" font-size="8.3" fill="#2a2a2a" stroke="#2a2a2a" stroke-width="0.25" text-anchor="middle" textLength="8.6" lengthAdjust="spacingAndGlyphs" >20</text>
<text x="801.4" y="720.6" font-size="8.3" fill="#2a2a2a" stroke="#2a2a2a" stroke-width="0.25" text-anchor="middle" textLength="8.6" lengthAdjust="spacingAndGlyphs" >50</text>
<text x="803.0" y="729.6" font-size="8.3" fill="#2a2a2a" stroke="#2a2a2a" stroke-width="0.25" text-anchor="middle" textLength="12.9" lengthAdjust="spacingAndGlyphs" >100</text>
<text x="811.2" y="738.7" font-size="8.3" fill="#2a2a2a" stroke="#2a2a2a" stroke-width="0.25" text-anchor="middle" textLength="12.9" lengthAdjust="spacingAndGlyphs" >200</text>
<text x="861.2" y="685.4" font-size="8.3" fill="#2a2a2a" stroke="#2a2a2a" stroke-width="0.25" text-anchor="middle" textLength="8.6" lengthAdjust="spacingAndGlyphs" >50</text>
<text x="868.6" y="691.1" font-size="8.3" fill="#2a2a2a" stroke="#2a2a2a" stroke-width="0.25" text-anchor="middle" textLength="8.6" lengthAdjust="spacingAndGlyphs" >20</text>
<text x="871.9" y="700.1" font-size="8.3" fill="#2a2a2a" stroke="#2a2a2a" stroke-width="0.25" text-anchor="middle" textLength="8.6" lengthAdjust="spacingAndGlyphs" >10</text>
<text x="874.3" y="710.0" font-size="8.3" fill="#2a2a2a" stroke="#2a2a2a" stroke-width="0.25" text-anchor="middle" textLength="4.3" lengthAdjust="spacingAndGlyphs" >5</text>
<text x="873.5" y="719.8" font-size="8.3" fill="#2a2a2a" stroke="#2a2a2a" stroke-width="0.25" text-anchor="middle" textLength="4.3" lengthAdjust="spacingAndGlyphs" >2</text>
<text x="870.2" y="730.5" font-size="8.3" fill="#2a2a2a" stroke="#2a2a2a" stroke-width="0.25" text-anchor="middle" textLength="4.3" lengthAdjust="spacingAndGlyphs" >1</text>
<text x="863.7" y="738.7" font-size="8.3" fill="#2a2a2a" stroke="#2a2a2a" stroke-width="0.25" text-anchor="middle" textLength="11.3" lengthAdjust="spacingAndGlyphs" >0.5</text>
<text x="807.1" y="746.2" font-size="9.5" fill="#2a2a2a" stroke="#2a2a2a" stroke-width="0.25" text-anchor="middle" textLength="12" lengthAdjust="spacingAndGlyphs" >ms</text>
<text x="866.8" y="746.2" font-size="9.5" fill="#2a2a2a" stroke="#2a2a2a" stroke-width="0.25" text-anchor="middle" textLength="11" lengthAdjust="spacingAndGlyphs" >μs</text>
<circle cx="838.3" cy="709.6" r="27" fill="#3c3c3c"/>
<circle cx="837.4" cy="708.6" r="26.8" fill="url(#knobBody)"/>
<circle cx="837.9" cy="709.1" r="15.2" fill="#5a5a5a"/>
<circle cx="837.2" cy="708.4" r="14" fill="url(#cap)"/>
<path d="M828.3 684.8L826.3 694.3L836.1 690.5Z" fill="#e87818"/>
<path d="M840.8 717.1L844.3 711.8L846.6 717.1Z" fill="#e87818"/>
<rect x="820.8" y="737.4" width="33.3" height="11.8" fill="#ffffff"/>
<rect x="820.8" y="737.4" width="33.3" height="1.6" fill="#000"/>
<rect x="820.8" y="737.4" width="1.2" height="11.8" fill="#000"/>
<text x="824.0" y="747.4" font-size="9.5" fill="#2a2ab0" stroke="#2a2ab0" stroke-width="0.25" text-anchor="start" >1m</text>
<text x="909.1" y="392.5" font-size="8.6" fill="#404040" stroke="#404040" stroke-width="0.25" text-anchor="middle" textLength="30" lengthAdjust="spacingAndGlyphs" >Position</text>
<rect x="891.5" y="394.2" width="37" height="74.5" fill="#eaeaea"/>
<rect x="892.3" y="395.09999999999997" width="35.6" height="73.5" fill="#000"/>
<rect x="893.3" y="396.09999999999997" width="33.6" height="71.5" fill="#a4a4a4"/>
<rect x="898.3" y="397.0" width="23" height="70" fill="url(#drumV)"/>
<rect x="921.1" y="397.0" width="1.1" height="70" fill="#101010"/>
<path d="M898.7 398.7h2.6M921.0 398.7h-2.6M898.7 403.3h2.6M921.0 403.3h-2.6M898.7 407.9h2.6M921.0 407.9h-2.6M898.7 412.6h2.6M921.0 412.6h-2.6M898.7 417.2h2.6M921.0 417.2h-2.6M898.7 421.8h2.6M921.0 421.8h-2.6M898.7 426.4h2.6M921.0 426.4h-2.6M898.7 431.0h2.6M921.0 431.0h-2.6M898.7 435.7h2.6M921.0 435.7h-2.6M898.7 440.3h2.6M921.0 440.3h-2.6M898.7 444.9h2.6M921.0 444.9h-2.6M898.7 449.5h2.6M921.0 449.5h-2.6M898.7 454.1h2.6M921.0 454.1h-2.6M898.7 458.8h2.6M921.0 458.8h-2.6M898.7 463.4h2.6M921.0 463.4h-2.6" stroke="#404040" stroke-width="0.7"/>
<clipPath id="dc891394"><rect x="898.3" y="397.0" width="23" height="70"/></clipPath>
<text x="910.1" y="411.2" font-size="9.6" fill="#141432" stroke="#141432" stroke-width="0.35" text-anchor="middle" textLength="9.0" lengthAdjust="spacingAndGlyphs" clip-path="url(#dc891394)">90</text>
<text x="910.1" y="429.7" font-size="9.6" fill="#141432" stroke="#141432" stroke-width="0.35" text-anchor="middle" textLength="13.5" lengthAdjust="spacingAndGlyphs" clip-path="url(#dc891394)">100</text>
<text x="910.1" y="448.3" font-size="9.6" fill="#141432" stroke="#141432" stroke-width="0.35" text-anchor="middle" textLength="13.5" lengthAdjust="spacingAndGlyphs" clip-path="url(#dc891394)">110</text>
<text x="910.1" y="466.9" font-size="9.6" fill="#141432" stroke="#141432" stroke-width="0.35" text-anchor="middle" textLength="13.5" lengthAdjust="spacingAndGlyphs" clip-path="url(#dc891394)">120</text>
<path d="M893.3 426.8L898.1 430.8L893.3 434.8Z" fill="#f00000"/>
<path d="M926.7 426.8L922.1 430.8L926.7 434.8Z" fill="#f00000"/>
<path d="M886.9 419.8L883.6999999999999 425.8H890.1ZM886.9 440.8L883.6999999999999 434.8H890.1Z" fill="#f4f000"/>
<path d="M886.9 424.8V435.8" stroke="#f4f000" stroke-width="1.2"/>
<text x="951.1" y="398.1" font-size="8.6" fill="#404040" stroke="#404040" stroke-width="0.25" text-anchor="end" textLength="11.7" lengthAdjust="spacingAndGlyphs" >AC</text>
<text x="951.1" y="411.2" font-size="8.6" fill="#404040" stroke="#404040" stroke-width="0.25" text-anchor="end" textLength="12.2" lengthAdjust="spacingAndGlyphs" >DC</text>
<text x="951.1" y="424.3" font-size="8.6" fill="#404040" stroke="#404040" stroke-width="0.25" text-anchor="end" textLength="18.3" lengthAdjust="spacingAndGlyphs" >GND</text>
<text x="951.1" y="437.4" font-size="8.6" fill="#404040" stroke="#404040" stroke-width="0.25" text-anchor="end" textLength="17" lengthAdjust="spacingAndGlyphs" >OFF</text>
<rect x="953.0999999999999" y="385.9" width="13.6" height="57" fill="#f0f0f0"/>
<rect x="953.8999999999999" y="386.7" width="12.5" height="55.6" fill="#000"/>
<rect x="954.8999999999999" y="387.7" width="10.5" height="53.6" fill="#a8a8a8"/>
<rect x="958.6999999999999" y="389.9" width="2.6" height="49" fill="#000"/>
<rect x="955.3" y="400.6" width="9.6" height="13.5" fill="#c8c8c8" stroke="#f8f8f8" stroke-width="0.8"/>
<rect x="955.6999999999999" y="401.1" width="9.2" height="13.0" fill="none" stroke="#505050" stroke-width="0.5"/>
<path d="M956.7 403.2h7M956.7 405.8h7M956.7 408.4h7M956.7 411.0h7" stroke="#404040" stroke-width="0.8"/>
<text x="951.1" y="454.9" font-size="8.6" fill="#303030" stroke="#303030" stroke-width="0.25" text-anchor="end" textLength="21" lengthAdjust="spacingAndGlyphs" >Invert</text>
<rect x="953.0" y="445.3" width="13.3" height="13.2" fill="#f0f0f0"/>
<rect x="953.8" y="446.1" width="12.5" height="12.399999999999999" fill="#202020"/>
<rect x="954.0" y="446.3" width="11.3" height="11.2" fill="url(#btnDark)"/>
<text x="951.1" y="470.0" font-size="8.6" fill="#303030" stroke="#303030" stroke-width="0.25" text-anchor="end" textLength="15" lengthAdjust="spacingAndGlyphs" >A+B</text>
<rect x="953.0" y="460.0" width="13.3" height="13.2" fill="#f0f0f0"/>
<rect x="953.8" y="460.8" width="12.5" height="12.399999999999999" fill="#202020"/>
<rect x="954.0" y="461.0" width="11.3" height="11.2" fill="url(#btnDark)"/>
<path d="M883.8 552.5V511.3A41 41 0 0 1 966.5 511.3V552.5Z" fill="#ffffff" stroke="#3a3a3a" stroke-width="1"/>
<path d="M938.4 488.8L946.4 474.9" stroke="#3a3a3a" stroke-width="3.0"/>
<path d="M938.4 488.8L946.4 474.9" stroke="#b1b1b3" stroke-width="1.2"/>
<rect x="907.1" y="529.3" width="36.1" height="23.7" fill="#b1b1b3" stroke="#3a3a3a" stroke-width="1"/>
<rect x="906.4" y="552.3" width="37.5" height="1.5" fill="#b1b1b3"/>
<path d="M898.9 511.3L894.9 511.3M901.6 499.7L898.0 497.9M909.1 490.4L906.6 487.3M919.9 485.4L919.1 481.5M931.8 485.6L932.8 481.7M942.4 491.0L945.0 487.9M945.7 494.3L948.8 491.7M950.3 502.2L954.1 500.9M951.9 511.3L955.9 511.3M950.3 520.4L954.1 521.7M945.7 528.3L948.8 530.9" stroke="#303030" stroke-width="0.8"/>
<text x="911.5" y="481.5" font-size="8.3" fill="#2a2a2a" stroke="#2a2a2a" stroke-width="0.25" text-anchor="middle" textLength="11.3" lengthAdjust="spacingAndGlyphs" >0.5</text>
<text x="925.4" y="478.8" font-size="8.3" fill="#2a2a2a" stroke="#2a2a2a" stroke-width="0.25" text-anchor="middle" textLength="11.3" lengthAdjust="spacingAndGlyphs" >0.2</text>
<text x="938.8" y="481.5" font-size="8.3" fill="#2a2a2a" stroke="#2a2a2a" stroke-width="0.25" text-anchor="middle" textLength="11.3" lengthAdjust="spacingAndGlyphs" >0.1</text>
<text x="899.9" y="489.9" font-size="8.3" fill="#2a2a2a" stroke="#2a2a2a" stroke-width="0.25" text-anchor="middle" textLength="4.3" lengthAdjust="spacingAndGlyphs" >1</text>
<text x="892.1" y="502.1" font-size="8.3" fill="#2a2a2a" stroke="#2a2a2a" stroke-width="0.25" text-anchor="middle" textLength="4.3" lengthAdjust="spacingAndGlyphs" >2</text>
<text x="889.3" y="514.8" font-size="8.3" fill="#2a2a2a" stroke="#2a2a2a" stroke-width="0.25" text-anchor="middle" textLength="4.3" lengthAdjust="spacingAndGlyphs" >5</text>
<text x="890.5" y="528.2" font-size="8.3" fill="#2a2a2a" stroke="#2a2a2a" stroke-width="0.25" text-anchor="middle" textLength="8.6" lengthAdjust="spacingAndGlyphs" >10</text>
<text x="898.2" y="539.3" font-size="8.3" fill="#2a2a2a" stroke="#2a2a2a" stroke-width="0.25" text-anchor="middle" textLength="8.6" lengthAdjust="spacingAndGlyphs" >20</text>
<text x="951.5" y="489.9" font-size="8.3" fill="#2a2a2a" stroke="#2a2a2a" stroke-width="0.25" text-anchor="middle" textLength="8.6" lengthAdjust="spacingAndGlyphs" >50</text>
<text x="958.7" y="502.1" font-size="8.3" fill="#2a2a2a" stroke="#2a2a2a" stroke-width="0.25" text-anchor="middle" textLength="8.6" lengthAdjust="spacingAndGlyphs" >20</text>
<text x="960.9" y="514.8" font-size="8.3" fill="#2a2a2a" stroke="#2a2a2a" stroke-width="0.25" text-anchor="middle" textLength="8.6" lengthAdjust="spacingAndGlyphs" >10</text>
<text x="958.2" y="528.2" font-size="8.3" fill="#2a2a2a" stroke="#2a2a2a" stroke-width="0.25" text-anchor="middle" textLength="4.3" lengthAdjust="spacingAndGlyphs" >5</text>
<text x="950.9" y="539.3" font-size="8.3" fill="#2a2a2a" stroke="#2a2a2a" stroke-width="0.25" text-anchor="middle" textLength="4.3" lengthAdjust="spacingAndGlyphs" >2</text>
<text x="895.1" y="548.9" font-size="9.5" fill="#2a2a2a" stroke="#2a2a2a" stroke-width="0.25" text-anchor="middle" textLength="6.2" lengthAdjust="spacingAndGlyphs" >V</text>
<text x="954.8" y="548.9" font-size="9.5" fill="#2a2a2a" stroke="#2a2a2a" stroke-width="0.25" text-anchor="middle" textLength="12.2" lengthAdjust="spacingAndGlyphs" >mV</text>
<circle cx="926.3" cy="512.3" r="27" fill="#3c3c3c"/>
<circle cx="925.4" cy="511.3" r="26.8" fill="url(#knobBody)"/>
<circle cx="925.9" cy="511.8" r="15.2" fill="#5a5a5a"/>
<circle cx="925.2" cy="511.1" r="14" fill="url(#cap)"/>
<path d="M901.3 503.0L907.3 510.7L910.8 500.7Z" fill="#f4f000"/>
<path d="M928.8 519.8L932.3 514.5L934.6 519.8Z" fill="#f4f000"/>
<rect x="908.8" y="540.1" width="33.3" height="11.8" fill="#ffffff"/>
<rect x="908.8" y="540.1" width="33.3" height="1.6" fill="#000"/>
<rect x="908.8" y="540.1" width="1.2" height="11.8" fill="#000"/>
<text x="912.0" y="550.1" font-size="9.5" fill="#2a2ab0" stroke="#2a2ab0" stroke-width="0.25" text-anchor="start" >2</text>
<text x="996.0" y="392.5" font-size="8.6" fill="#404040" stroke="#404040" stroke-width="0.25" text-anchor="middle" textLength="30" lengthAdjust="spacingAndGlyphs" >Position</text>
<rect x="978.4000000000001" y="394.2" width="37" height="74.5" fill="#eaeaea"/>
<rect x="979.2" y="395.09999999999997" width="35.6" height="73.5" fill="#000"/>
<rect x="980.2" y="396.09999999999997" width="33.6" height="71.5" fill="#a4a4a4"/>
<rect x="985.2" y="397.0" width="23" height="70" fill="url(#drumV)"/>
<rect x="1008.0000000000001" y="397.0" width="1.1" height="70" fill="#101010"/>
<path d="M985.6 398.7h2.6M1007.9 398.7h-2.6M985.6 403.3h2.6M1007.9 403.3h-2.6M985.6 407.9h2.6M1007.9 407.9h-2.6M985.6 412.6h2.6M1007.9 412.6h-2.6M985.6 417.2h2.6M1007.9 417.2h-2.6M985.6 421.8h2.6M1007.9 421.8h-2.6M985.6 426.4h2.6M1007.9 426.4h-2.6M985.6 431.0h2.6M1007.9 431.0h-2.6M985.6 435.7h2.6M1007.9 435.7h-2.6M985.6 440.3h2.6M1007.9 440.3h-2.6M985.6 444.9h2.6M1007.9 444.9h-2.6M985.6 449.5h2.6M1007.9 449.5h-2.6M985.6 454.1h2.6M1007.9 454.1h-2.6M985.6 458.8h2.6M1007.9 458.8h-2.6M985.6 463.4h2.6M1007.9 463.4h-2.6" stroke="#404040" stroke-width="0.7"/>
<clipPath id="dc978394"><rect x="985.2" y="397.0" width="23" height="70"/></clipPath>
<text x="997.0" y="404.4" font-size="9.6" fill="#141432" stroke="#141432" stroke-width="0.35" text-anchor="middle" textLength="12.3" lengthAdjust="spacingAndGlyphs" clip-path="url(#dc978394)">-70</text>
<text x="997.0" y="422.3" font-size="9.6" fill="#141432" stroke="#141432" stroke-width="0.35" text-anchor="middle" textLength="12.3" lengthAdjust="spacingAndGlyphs" clip-path="url(#dc978394)">-60</text>
<text x="997.0" y="440.7" font-size="9.6" fill="#141432" stroke="#141432" stroke-width="0.35" text-anchor="middle" textLength="12.3" lengthAdjust="spacingAndGlyphs" clip-path="url(#dc978394)">-50</text>
<text x="997.0" y="459.1" font-size="9.6" fill="#141432" stroke="#141432" stroke-width="0.35" text-anchor="middle" textLength="12.3" lengthAdjust="spacingAndGlyphs" clip-path="url(#dc978394)">-40</text>
<path d="M980.2 426.8L985.0000000000001 430.8L980.2 434.8Z" fill="#f00000"/>
<path d="M1013.6000000000001 426.8L1009.0000000000001 430.8L1013.6000000000001 434.8Z" fill="#f00000"/>
<path d="M973.8000000000001 419.8L970.6 425.8H977.0000000000001ZM973.8000000000001 440.8L970.6 434.8H977.0000000000001Z" fill="#e8107c"/>
<path d="M973.8000000000001 424.8V435.8" stroke="#e8107c" stroke-width="1.2"/>
<text x="1038.0" y="398.1" font-size="8.6" fill="#404040" stroke="#404040" stroke-width="0.25" text-anchor="end" textLength="11.7" lengthAdjust="spacingAndGlyphs" >AC</text>
<text x="1038.0" y="411.2" font-size="8.6" fill="#404040" stroke="#404040" stroke-width="0.25" text-anchor="end" textLength="12.2" lengthAdjust="spacingAndGlyphs" >DC</text>
<text x="1038.0" y="424.3" font-size="8.6" fill="#404040" stroke="#404040" stroke-width="0.25" text-anchor="end" textLength="18.3" lengthAdjust="spacingAndGlyphs" >GND</text>
<text x="1038.0" y="437.4" font-size="8.6" fill="#404040" stroke="#404040" stroke-width="0.25" text-anchor="end" textLength="17" lengthAdjust="spacingAndGlyphs" >OFF</text>
<rect x="1040.0" y="385.9" width="13.6" height="57" fill="#f0f0f0"/>
<rect x="1040.8" y="386.7" width="12.5" height="55.6" fill="#000"/>
<rect x="1041.8" y="387.7" width="10.5" height="53.6" fill="#a8a8a8"/>
<rect x="1045.6" y="389.9" width="2.6" height="49" fill="#000"/>
<rect x="1042.2" y="387.5" width="9.6" height="13.5" fill="#c8c8c8" stroke="#f8f8f8" stroke-width="0.8"/>
<rect x="1042.6" y="388.0" width="9.2" height="13.0" fill="none" stroke="#505050" stroke-width="0.5"/>
<path d="M1043.6 390.1h7M1043.6 392.7h7M1043.6 395.3h7M1043.6 397.9h7" stroke="#404040" stroke-width="0.8"/>
<text x="1038.0" y="454.9" font-size="8.6" fill="#303030" stroke="#303030" stroke-width="0.25" text-anchor="end" textLength="21" lengthAdjust="spacingAndGlyphs" >Invert</text>
<rect x="1039.9" y="445.3" width="13.3" height="13.2" fill="#f0f0f0"/>
<rect x="1040.7" y="446.1" width="12.5" height="12.399999999999999" fill="#202020"/>
<rect x="1040.9" y="446.3" width="11.3" height="11.2" fill="url(#btnPink)"/>
<text x="1038.0" y="470.0" font-size="8.6" fill="#303030" stroke="#303030" stroke-width="0.25" text-anchor="end" textLength="15" lengthAdjust="spacingAndGlyphs" >C-D</text>
<rect x="1039.9" y="460.0" width="13.3" height="13.2" fill="#f0f0f0"/>
<rect x="1040.7" y="460.8" width="12.5" height="12.399999999999999" fill="#202020"/>
<rect x="1040.9" y="461.0" width="11.3" height="11.2" fill="url(#btnDark)"/>
<path d="M970.7 552.5V511.3A41 41 0 0 1 1053.4 511.3V552.5Z" fill="#ffffff" stroke="#3a3a3a" stroke-width="1"/>
<path d="M1025.3 488.8L1033.3 474.9" stroke="#3a3a3a" stroke-width="3.0"/>
<path d="M1025.3 488.8L1033.3 474.9" stroke="#b1b1b3" stroke-width="1.2"/>
<rect x="994.0" y="529.3" width="36.1" height="23.7" fill="#b1b1b3" stroke="#3a3a3a" stroke-width="1"/>
<rect x="993.3" y="552.3" width="37.5" height="1.5" fill="#b1b1b3"/>
<path d="M985.8 511.3L981.8 511.3M988.5 499.7L984.9 497.9M996.0 490.4L993.5 487.3M1006.8 485.4L1006.0 481.5M1018.7 485.6L1019.7 481.7M1029.3 491.0L1031.9 487.9M1032.6 494.3L1035.7 491.7M1037.2 502.2L1041.0 500.9M1038.8 511.3L1042.8 511.3M1037.2 520.4L1041.0 521.7M1032.6 528.3L1035.7 530.9" stroke="#303030" stroke-width="0.8"/>
<text x="998.4" y="481.5" font-size="8.3" fill="#2a2a2a" stroke="#2a2a2a" stroke-width="0.25" text-anchor="middle" textLength="11.3" lengthAdjust="spacingAndGlyphs" >0.5</text>
<text x="1012.3" y="478.8" font-size="8.3" fill="#2a2a2a" stroke="#2a2a2a" stroke-width="0.25" text-anchor="middle" textLength="11.3" lengthAdjust="spacingAndGlyphs" >0.2</text>
<text x="1025.7" y="481.5" font-size="8.3" fill="#2a2a2a" stroke="#2a2a2a" stroke-width="0.25" text-anchor="middle" textLength="11.3" lengthAdjust="spacingAndGlyphs" >0.1</text>
<text x="986.8" y="489.9" font-size="8.3" fill="#2a2a2a" stroke="#2a2a2a" stroke-width="0.25" text-anchor="middle" textLength="4.3" lengthAdjust="spacingAndGlyphs" >1</text>
<text x="979.0" y="502.1" font-size="8.3" fill="#2a2a2a" stroke="#2a2a2a" stroke-width="0.25" text-anchor="middle" textLength="4.3" lengthAdjust="spacingAndGlyphs" >2</text>
<text x="976.2" y="514.8" font-size="8.3" fill="#2a2a2a" stroke="#2a2a2a" stroke-width="0.25" text-anchor="middle" textLength="4.3" lengthAdjust="spacingAndGlyphs" >5</text>
<text x="977.4" y="528.2" font-size="8.3" fill="#2a2a2a" stroke="#2a2a2a" stroke-width="0.25" text-anchor="middle" textLength="8.6" lengthAdjust="spacingAndGlyphs" >10</text>
<text x="985.1" y="539.3" font-size="8.3" fill="#2a2a2a" stroke="#2a2a2a" stroke-width="0.25" text-anchor="middle" textLength="8.6" lengthAdjust="spacingAndGlyphs" >20</text>
<text x="1038.4" y="489.9" font-size="8.3" fill="#2a2a2a" stroke="#2a2a2a" stroke-width="0.25" text-anchor="middle" textLength="8.6" lengthAdjust="spacingAndGlyphs" >50</text>
<text x="1045.6" y="502.1" font-size="8.3" fill="#2a2a2a" stroke="#2a2a2a" stroke-width="0.25" text-anchor="middle" textLength="8.6" lengthAdjust="spacingAndGlyphs" >20</text>
<text x="1047.8" y="514.8" font-size="8.3" fill="#2a2a2a" stroke="#2a2a2a" stroke-width="0.25" text-anchor="middle" textLength="8.6" lengthAdjust="spacingAndGlyphs" >10</text>
<text x="1045.1" y="528.2" font-size="8.3" fill="#2a2a2a" stroke="#2a2a2a" stroke-width="0.25" text-anchor="middle" textLength="4.3" lengthAdjust="spacingAndGlyphs" >5</text>
<text x="1037.8" y="539.3" font-size="8.3" fill="#2a2a2a" stroke="#2a2a2a" stroke-width="0.25" text-anchor="middle" textLength="4.3" lengthAdjust="spacingAndGlyphs" >2</text>
<text x="982.0" y="548.9" font-size="9.5" fill="#2a2a2a" stroke="#2a2a2a" stroke-width="0.25" text-anchor="middle" textLength="6.2" lengthAdjust="spacingAndGlyphs" >V</text>
<text x="1041.7" y="548.9" font-size="9.5" fill="#2a2a2a" stroke="#2a2a2a" stroke-width="0.25" text-anchor="middle" textLength="12.2" lengthAdjust="spacingAndGlyphs" >mV</text>
<circle cx="1013.2" cy="512.3" r="27" fill="#3c3c3c"/>
<circle cx="1012.3" cy="511.3" r="26.8" fill="url(#knobBody)"/>
<circle cx="1012.8" cy="511.8" r="15.2" fill="#5a5a5a"/>
<circle cx="1012.1" cy="511.1" r="14" fill="url(#cap)"/>
<path d="M994.0 493.6L996.2 503.1L1003.5 495.5Z" fill="#e8107c"/>
<path d="M1015.7 519.8L1019.2 514.5L1021.5 519.8Z" fill="#e8107c"/>
<rect x="995.7" y="540.1" width="33.3" height="11.8" fill="#ffffff"/>
<rect x="995.7" y="540.1" width="33.3" height="1.6" fill="#000"/>
<rect x="995.7" y="540.1" width="1.2" height="11.8" fill="#000"/>
<text x="998.9" y="550.1" font-size="9.5" fill="#2a2ab0" stroke="#2a2ab0" stroke-width="0.25" text-anchor="start" >1</text>
<text x="909.1" y="589.0" font-size="8.6" fill="#404040" stroke="#404040" stroke-width="0.25" text-anchor="middle" textLength="30" lengthAdjust="spacingAndGlyphs" >Position</text>
<rect x="891.5" y="590.7" width="37" height="74.5" fill="#eaeaea"/>
<rect x="892.3" y="591.6" width="35.6" height="73.5" fill="#000"/>
<rect x="893.3" y="592.6" width="33.6" height="71.5" fill="#a4a4a4"/>
<rect x="898.3" y="593.5" width="23" height="70" fill="url(#drumV)"/>
<rect x="921.1" y="593.5" width="1.1" height="70" fill="#101010"/>
<path d="M898.7 595.2h2.6M921.0 595.2h-2.6M898.7 599.8h2.6M921.0 599.8h-2.6M898.7 604.4h2.6M921.0 604.4h-2.6M898.7 609.1h2.6M921.0 609.1h-2.6M898.7 613.7h2.6M921.0 613.7h-2.6M898.7 618.3h2.6M921.0 618.3h-2.6M898.7 622.9h2.6M921.0 622.9h-2.6M898.7 627.5h2.6M921.0 627.5h-2.6M898.7 632.2h2.6M921.0 632.2h-2.6M898.7 636.8h2.6M921.0 636.8h-2.6M898.7 641.4h2.6M921.0 641.4h-2.6M898.7 646.0h2.6M921.0 646.0h-2.6M898.7 650.6h2.6M921.0 650.6h-2.6M898.7 655.3h2.6M921.0 655.3h-2.6M898.7 659.9h2.6M921.0 659.9h-2.6" stroke="#404040" stroke-width="0.7"/>
<clipPath id="dc891590"><rect x="898.3" y="593.5" width="23" height="70"/></clipPath>
<text x="910.1" y="608.1" font-size="9.6" fill="#141432" stroke="#141432" stroke-width="0.35" text-anchor="middle" textLength="12.3" lengthAdjust="spacingAndGlyphs" clip-path="url(#dc891590)">-40</text>
<text x="910.1" y="626.8" font-size="9.6" fill="#141432" stroke="#141432" stroke-width="0.35" text-anchor="middle" textLength="12.3" lengthAdjust="spacingAndGlyphs" clip-path="url(#dc891590)">-30</text>
<text x="910.1" y="645.6" font-size="9.6" fill="#141432" stroke="#141432" stroke-width="0.35" text-anchor="middle" textLength="12.3" lengthAdjust="spacingAndGlyphs" clip-path="url(#dc891590)">-20</text>
<text x="910.1" y="663.7" font-size="9.6" fill="#141432" stroke="#141432" stroke-width="0.35" text-anchor="middle" textLength="12.3" lengthAdjust="spacingAndGlyphs" clip-path="url(#dc891590)">-10</text>
<path d="M893.3 623.3L898.1 627.3L893.3 631.3Z" fill="#f00000"/>
<path d="M926.7 623.3L922.1 627.3L926.7 631.3Z" fill="#f00000"/>
<path d="M886.9 616.3L883.6999999999999 622.3H890.1ZM886.9 637.3L883.6999999999999 631.3H890.1Z" fill="#28a0e8"/>
<path d="M886.9 621.3V632.3" stroke="#28a0e8" stroke-width="1.2"/>
<text x="951.1" y="594.6" font-size="8.6" fill="#404040" stroke="#404040" stroke-width="0.25" text-anchor="end" textLength="11.7" lengthAdjust="spacingAndGlyphs" >AC</text>
<text x="951.1" y="607.7" font-size="8.6" fill="#404040" stroke="#404040" stroke-width="0.25" text-anchor="end" textLength="12.2" lengthAdjust="spacingAndGlyphs" >DC</text>
<text x="951.1" y="620.8" font-size="8.6" fill="#404040" stroke="#404040" stroke-width="0.25" text-anchor="end" textLength="18.3" lengthAdjust="spacingAndGlyphs" >GND</text>
<text x="951.1" y="633.9" font-size="8.6" fill="#404040" stroke="#404040" stroke-width="0.25" text-anchor="end" textLength="17" lengthAdjust="spacingAndGlyphs" >OFF</text>
<rect x="953.0999999999999" y="582.4" width="13.6" height="57" fill="#f0f0f0"/>
<rect x="953.8999999999999" y="583.1999999999999" width="12.5" height="55.6" fill="#000"/>
<rect x="954.8999999999999" y="584.1999999999999" width="10.5" height="53.6" fill="#a8a8a8"/>
<rect x="958.6999999999999" y="586.4" width="2.6" height="49" fill="#000"/>
<rect x="955.3" y="584.2" width="9.6" height="13.5" fill="#c8c8c8" stroke="#f8f8f8" stroke-width="0.8"/>
<rect x="955.6999999999999" y="584.7" width="9.2" height="13.0" fill="none" stroke="#505050" stroke-width="0.5"/>
<path d="M956.7 586.8h7M956.7 589.4h7M956.7 592.0h7M956.7 594.6h7" stroke="#404040" stroke-width="0.8"/>
<text x="951.1" y="651.4" font-size="8.6" fill="#303030" stroke="#303030" stroke-width="0.25" text-anchor="end" textLength="21" lengthAdjust="spacingAndGlyphs" >Invert</text>
<rect x="953.0" y="641.8" width="13.3" height="13.2" fill="#f0f0f0"/>
<rect x="953.8" y="642.5999999999999" width="12.5" height="12.399999999999999" fill="#202020"/>
<rect x="954.0" y="642.8" width="11.3" height="11.2" fill="url(#btnDark)"/>
<path d="M883.8 749.0V707.8A41 41 0 0 1 966.5 707.8V749.0Z" fill="#ffffff" stroke="#3a3a3a" stroke-width="1"/>
<path d="M938.4 685.3L946.4 671.4" stroke="#3a3a3a" stroke-width="3.0"/>
<path d="M938.4 685.3L946.4 671.4" stroke="#b1b1b3" stroke-width="1.2"/>
<rect x="907.1" y="725.8" width="36.1" height="23.7" fill="#b1b1b3" stroke="#3a3a3a" stroke-width="1"/>
<rect x="906.4" y="748.8" width="37.5" height="1.5" fill="#b1b1b3"/>
<path d="M898.9 707.8L894.9 707.8M901.6 696.2L898.0 694.4M909.1 686.9L906.6 683.8M919.9 681.9L919.1 678.0M931.8 682.1L932.8 678.2M942.4 687.5L945.0 684.4M945.7 690.8L948.8 688.2M950.3 698.7L954.1 697.4M951.9 707.8L955.9 707.8M950.3 716.9L954.1 718.2M945.7 724.8L948.8 727.4" stroke="#303030" stroke-width="0.8"/>
<text x="911.5" y="678.0" font-size="8.3" fill="#2a2a2a" stroke="#2a2a2a" stroke-width="0.25" text-anchor="middle" textLength="11.3" lengthAdjust="spacingAndGlyphs" >0.5</text>
<text x="925.4" y="675.3" font-size="8.3" fill="#2a2a2a" stroke="#2a2a2a" stroke-width="0.25" text-anchor="middle" textLength="11.3" lengthAdjust="spacingAndGlyphs" >0.2</text>
<text x="938.8" y="678.0" font-size="8.3" fill="#2a2a2a" stroke="#2a2a2a" stroke-width="0.25" text-anchor="middle" textLength="11.3" lengthAdjust="spacingAndGlyphs" >0.1</text>
<text x="899.9" y="686.4" font-size="8.3" fill="#2a2a2a" stroke="#2a2a2a" stroke-width="0.25" text-anchor="middle" textLength="4.3" lengthAdjust="spacingAndGlyphs" >1</text>
<text x="892.1" y="698.6" font-size="8.3" fill="#2a2a2a" stroke="#2a2a2a" stroke-width="0.25" text-anchor="middle" textLength="4.3" lengthAdjust="spacingAndGlyphs" >2</text>
<text x="889.3" y="711.3" font-size="8.3" fill="#2a2a2a" stroke="#2a2a2a" stroke-width="0.25" text-anchor="middle" textLength="4.3" lengthAdjust="spacingAndGlyphs" >5</text>
<text x="890.5" y="724.7" font-size="8.3" fill="#2a2a2a" stroke="#2a2a2a" stroke-width="0.25" text-anchor="middle" textLength="8.6" lengthAdjust="spacingAndGlyphs" >10</text>
<text x="898.2" y="735.8" font-size="8.3" fill="#2a2a2a" stroke="#2a2a2a" stroke-width="0.25" text-anchor="middle" textLength="8.6" lengthAdjust="spacingAndGlyphs" >20</text>
<text x="951.5" y="686.4" font-size="8.3" fill="#2a2a2a" stroke="#2a2a2a" stroke-width="0.25" text-anchor="middle" textLength="8.6" lengthAdjust="spacingAndGlyphs" >50</text>
<text x="958.7" y="698.6" font-size="8.3" fill="#2a2a2a" stroke="#2a2a2a" stroke-width="0.25" text-anchor="middle" textLength="8.6" lengthAdjust="spacingAndGlyphs" >20</text>
<text x="960.9" y="711.3" font-size="8.3" fill="#2a2a2a" stroke="#2a2a2a" stroke-width="0.25" text-anchor="middle" textLength="8.6" lengthAdjust="spacingAndGlyphs" >10</text>
<text x="958.2" y="724.7" font-size="8.3" fill="#2a2a2a" stroke="#2a2a2a" stroke-width="0.25" text-anchor="middle" textLength="4.3" lengthAdjust="spacingAndGlyphs" >5</text>
<text x="950.9" y="735.8" font-size="8.3" fill="#2a2a2a" stroke="#2a2a2a" stroke-width="0.25" text-anchor="middle" textLength="4.3" lengthAdjust="spacingAndGlyphs" >2</text>
<text x="895.1" y="745.4" font-size="9.5" fill="#2a2a2a" stroke="#2a2a2a" stroke-width="0.25" text-anchor="middle" textLength="6.2" lengthAdjust="spacingAndGlyphs" >V</text>
<text x="954.8" y="745.4" font-size="9.5" fill="#2a2a2a" stroke="#2a2a2a" stroke-width="0.25" text-anchor="middle" textLength="12.2" lengthAdjust="spacingAndGlyphs" >mV</text>
<circle cx="926.3" cy="708.8" r="27" fill="#3c3c3c"/>
<circle cx="925.4" cy="707.8" r="26.8" fill="url(#knobBody)"/>
<circle cx="925.9" cy="708.3" r="15.2" fill="#5a5a5a"/>
<circle cx="925.2" cy="707.6" r="14" fill="url(#cap)"/>
<path d="M907.1 690.1L909.3 699.6L916.6 692.0Z" fill="#28a0e8"/>
<path d="M928.8 716.3L932.3 711.0L934.6 716.3Z" fill="#28a0e8"/>
<rect x="908.8" y="736.6" width="33.3" height="11.8" fill="#ffffff"/>
<rect x="908.8" y="736.6" width="33.3" height="1.6" fill="#000"/>
<rect x="908.8" y="736.6" width="1.2" height="11.8" fill="#000"/>
<text x="912.0" y="746.6" font-size="9.5" fill="#2a2ab0" stroke="#2a2ab0" stroke-width="0.25" text-anchor="start" >1</text>
<text x="996.0" y="589.0" font-size="8.6" fill="#404040" stroke="#404040" stroke-width="0.25" text-anchor="middle" textLength="30" lengthAdjust="spacingAndGlyphs" >Position</text>
<rect x="978.4000000000001" y="590.7" width="37" height="74.5" fill="#eaeaea"/>
<rect x="979.2" y="591.6" width="35.6" height="73.5" fill="#000"/>
<rect x="980.2" y="592.6" width="33.6" height="71.5" fill="#a4a4a4"/>
<rect x="985.2" y="593.5" width="23" height="70" fill="url(#drumV)"/>
<rect x="1008.0000000000001" y="593.5" width="1.1" height="70" fill="#101010"/>
<path d="M985.6 595.2h2.6M1007.9 595.2h-2.6M985.6 599.8h2.6M1007.9 599.8h-2.6M985.6 604.4h2.6M1007.9 604.4h-2.6M985.6 609.1h2.6M1007.9 609.1h-2.6M985.6 613.7h2.6M1007.9 613.7h-2.6M985.6 618.3h2.6M1007.9 618.3h-2.6M985.6 622.9h2.6M1007.9 622.9h-2.6M985.6 627.5h2.6M1007.9 627.5h-2.6M985.6 632.2h2.6M1007.9 632.2h-2.6M985.6 636.8h2.6M1007.9 636.8h-2.6M985.6 641.4h2.6M1007.9 641.4h-2.6M985.6 646.0h2.6M1007.9 646.0h-2.6M985.6 650.6h2.6M1007.9 650.6h-2.6M985.6 655.3h2.6M1007.9 655.3h-2.6M985.6 659.9h2.6M1007.9 659.9h-2.6" stroke="#404040" stroke-width="0.7"/>
<clipPath id="dc978590"><rect x="985.2" y="593.5" width="23" height="70"/></clipPath>
<text x="997.0" y="611.3" font-size="9.6" fill="#141432" stroke="#141432" stroke-width="0.35" text-anchor="middle" textLength="16.8" lengthAdjust="spacingAndGlyphs" clip-path="url(#dc978590)">-130</text>
<text x="997.0" y="630.4" font-size="9.6" fill="#141432" stroke="#141432" stroke-width="0.35" text-anchor="middle" textLength="16.8" lengthAdjust="spacingAndGlyphs" clip-path="url(#dc978590)">-120</text>
<text x="997.0" y="649.4" font-size="9.6" fill="#141432" stroke="#141432" stroke-width="0.35" text-anchor="middle" textLength="16.8" lengthAdjust="spacingAndGlyphs" clip-path="url(#dc978590)">-110</text>
<path d="M980.2 623.3L985.0000000000001 627.3L980.2 631.3Z" fill="#f00000"/>
<path d="M1013.6000000000001 623.3L1009.0000000000001 627.3L1013.6000000000001 631.3Z" fill="#f00000"/>
<path d="M973.8000000000001 616.3L970.6 622.3H977.0000000000001ZM973.8000000000001 637.3L970.6 631.3H977.0000000000001Z" fill="#10a040"/>
<path d="M973.8000000000001 621.3V632.3" stroke="#10a040" stroke-width="1.2"/>
<text x="1038.0" y="594.6" font-size="8.6" fill="#404040" stroke="#404040" stroke-width="0.25" text-anchor="end" textLength="11.7" lengthAdjust="spacingAndGlyphs" >AC</text>
<text x="1038.0" y="607.7" font-size="8.6" fill="#404040" stroke="#404040" stroke-width="0.25" text-anchor="end" textLength="12.2" lengthAdjust="spacingAndGlyphs" >DC</text>
<text x="1038.0" y="620.8" font-size="8.6" fill="#404040" stroke="#404040" stroke-width="0.25" text-anchor="end" textLength="18.3" lengthAdjust="spacingAndGlyphs" >GND</text>
<text x="1038.0" y="633.9" font-size="8.6" fill="#404040" stroke="#404040" stroke-width="0.25" text-anchor="end" textLength="17" lengthAdjust="spacingAndGlyphs" >OFF</text>
<rect x="1040.0" y="582.4" width="13.6" height="57" fill="#f0f0f0"/>
<rect x="1040.8" y="583.1999999999999" width="12.5" height="55.6" fill="#000"/>
<rect x="1041.8" y="584.1999999999999" width="10.5" height="53.6" fill="#a8a8a8"/>
<rect x="1045.6" y="586.4" width="2.6" height="49" fill="#000"/>
<rect x="1042.2" y="624.6" width="9.6" height="13.5" fill="#c8c8c8" stroke="#f8f8f8" stroke-width="0.8"/>
<rect x="1042.6" y="625.1" width="9.2" height="13.0" fill="none" stroke="#505050" stroke-width="0.5"/>
<path d="M1043.6 627.2h7M1043.6 629.8h7M1043.6 632.4h7M1043.6 635.0h7" stroke="#404040" stroke-width="0.8"/>
<text x="1038.0" y="651.4" font-size="8.6" fill="#303030" stroke="#303030" stroke-width="0.25" text-anchor="end" textLength="21" lengthAdjust="spacingAndGlyphs" >Invert</text>
<rect x="1039.9" y="641.8" width="13.3" height="13.2" fill="#f0f0f0"/>
<rect x="1040.7" y="642.5999999999999" width="12.5" height="12.399999999999999" fill="#202020"/>
<rect x="1040.9" y="642.8" width="11.3" height="11.2" fill="url(#btnDark)"/>
<path d="M970.7 749.0V707.8A41 41 0 0 1 1053.4 707.8V749.0Z" fill="#ffffff" stroke="#3a3a3a" stroke-width="1"/>
<path d="M1025.3 685.3L1033.3 671.4" stroke="#3a3a3a" stroke-width="3.0"/>
<path d="M1025.3 685.3L1033.3 671.4" stroke="#b1b1b3" stroke-width="1.2"/>
<rect x="994.0" y="725.8" width="36.1" height="23.7" fill="#b1b1b3" stroke="#3a3a3a" stroke-width="1"/>
<rect x="993.3" y="748.8" width="37.5" height="1.5" fill="#b1b1b3"/>
<path d="M985.8 707.8L981.8 707.8M988.5 696.2L984.9 694.4M996.0 686.9L993.5 683.8M1006.8 681.9L1006.0 678.0M1018.7 682.1L1019.7 678.2M1029.3 687.5L1031.9 684.4M1032.6 690.8L1035.7 688.2M1037.2 698.7L1041.0 697.4M1038.8 707.8L1042.8 707.8M1037.2 716.9L1041.0 718.2M1032.6 724.8L1035.7 727.4" stroke="#303030" stroke-width="0.8"/>
<text x="998.4" y="678.0" font-size="8.3" fill="#2a2a2a" stroke="#2a2a2a" stroke-width="0.25" text-anchor="middle" textLength="11.3" lengthAdjust="spacingAndGlyphs" >0.5</text>
<text x="1012.3" y="675.3" font-size="8.3" fill="#2a2a2a" stroke="#2a2a2a" stroke-width="0.25" text-anchor="middle" textLength="11.3" lengthAdjust="spacingAndGlyphs" >0.2</text>
<text x="1025.7" y="678.0" font-size="8.3" fill="#2a2a2a" stroke="#2a2a2a" stroke-width="0.25" text-anchor="middle" textLength="11.3" lengthAdjust="spacingAndGlyphs" >0.1</text>
<text x="986.8" y="686.4" font-size="8.3" fill="#2a2a2a" stroke="#2a2a2a" stroke-width="0.25" text-anchor="middle" textLength="4.3" lengthAdjust="spacingAndGlyphs" >1</text>
<text x="979.0" y="698.6" font-size="8.3" fill="#2a2a2a" stroke="#2a2a2a" stroke-width="0.25" text-anchor="middle" textLength="4.3" lengthAdjust="spacingAndGlyphs" >2</text>
<text x="976.2" y="711.3" font-size="8.3" fill="#2a2a2a" stroke="#2a2a2a" stroke-width="0.25" text-anchor="middle" textLength="4.3" lengthAdjust="spacingAndGlyphs" >5</text>
<text x="977.4" y="724.7" font-size="8.3" fill="#2a2a2a" stroke="#2a2a2a" stroke-width="0.25" text-anchor="middle" textLength="8.6" lengthAdjust="spacingAndGlyphs" >10</text>
<text x="985.1" y="735.8" font-size="8.3" fill="#2a2a2a" stroke="#2a2a2a" stroke-width="0.25" text-anchor="middle" textLength="8.6" lengthAdjust="spacingAndGlyphs" >20</text>
<text x="1038.4" y="686.4" font-size="8.3" fill="#2a2a2a" stroke="#2a2a2a" stroke-width="0.25" text-anchor="middle" textLength="8.6" lengthAdjust="spacingAndGlyphs" >50</text>
<text x="1045.6" y="698.6" font-size="8.3" fill="#2a2a2a" stroke="#2a2a2a" stroke-width="0.25" text-anchor="middle" textLength="8.6" lengthAdjust="spacingAndGlyphs" >20</text>
<text x="1047.8" y="711.3" font-size="8.3" fill="#2a2a2a" stroke="#2a2a2a" stroke-width="0.25" text-anchor="middle" textLength="8.6" lengthAdjust="spacingAndGlyphs" >10</text>
<text x="1045.1" y="724.7" font-size="8.3" fill="#2a2a2a" stroke="#2a2a2a" stroke-width="0.25" text-anchor="middle" textLength="4.3" lengthAdjust="spacingAndGlyphs" >5</text>
<text x="1037.8" y="735.8" font-size="8.3" fill="#2a2a2a" stroke="#2a2a2a" stroke-width="0.25" text-anchor="middle" textLength="4.3" lengthAdjust="spacingAndGlyphs" >2</text>
<text x="982.0" y="745.4" font-size="9.5" fill="#2a2a2a" stroke="#2a2a2a" stroke-width="0.25" text-anchor="middle" textLength="6.2" lengthAdjust="spacingAndGlyphs" >V</text>
<text x="1041.7" y="745.4" font-size="9.5" fill="#2a2a2a" stroke="#2a2a2a" stroke-width="0.25" text-anchor="middle" textLength="12.2" lengthAdjust="spacingAndGlyphs" >mV</text>
<circle cx="1013.2" cy="708.8" r="27" fill="#3c3c3c"/>
<circle cx="1012.3" cy="707.8" r="26.8" fill="url(#knobBody)"/>
<circle cx="1012.8" cy="708.3" r="15.2" fill="#5a5a5a"/>
<circle cx="1012.1" cy="707.6" r="14" fill="url(#cap)"/>
<path d="M986.8 707.8L995.0 713.1L995.0 702.5Z" fill="#10a040"/>
<path d="M1015.7 716.3L1019.2 711.0L1021.5 716.3Z" fill="#10a040"/>
<rect x="995.7" y="736.6" width="33.3" height="11.8" fill="#ffffff"/>
<rect x="995.7" y="736.6" width="33.3" height="1.6" fill="#000"/>
<rect x="995.7" y="736.6" width="1.2" height="11.8" fill="#000"/>
<text x="998.9" y="746.6" font-size="9.5" fill="#2a2ab0" stroke="#2a2ab0" stroke-width="0.25" text-anchor="start" >5</text>
</svg></body></html>
